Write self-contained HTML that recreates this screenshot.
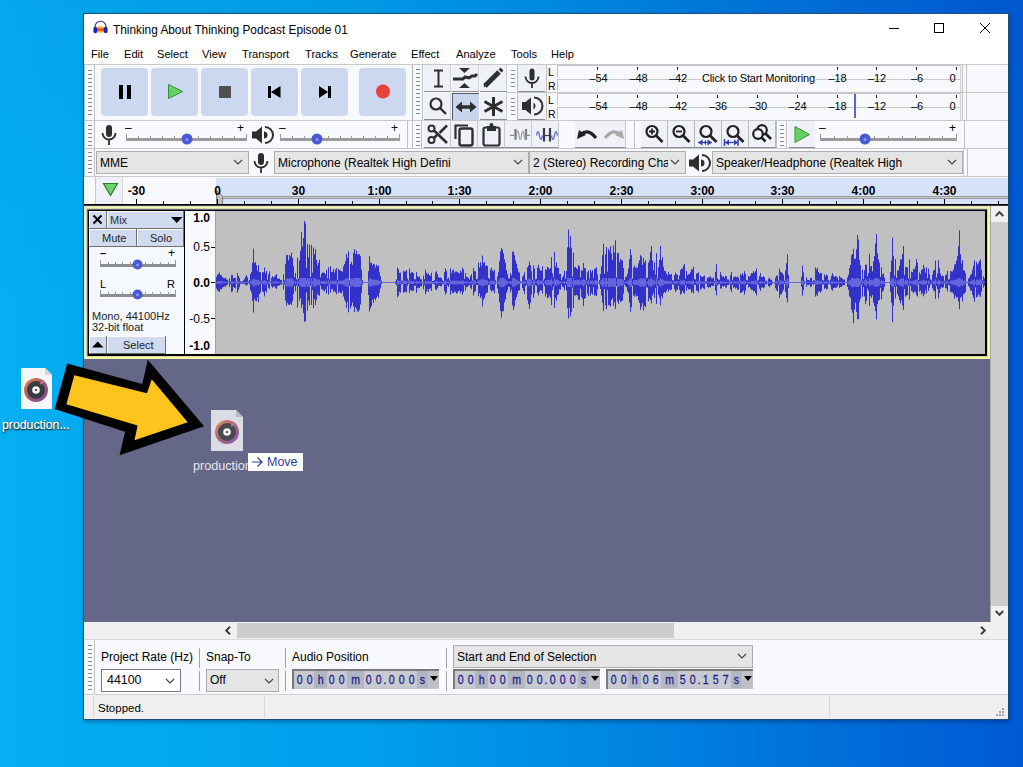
<!DOCTYPE html><html><head><meta charset="utf-8"><style>
html,body{margin:0;padding:0}
body{width:1023px;height:767px;overflow:hidden;position:relative;font-family:"Liberation Sans",sans-serif;font-size:12px;color:#000}
.a{position:absolute;box-sizing:border-box}
.t{white-space:nowrap;line-height:14px}
svg{position:absolute;overflow:visible}
</style></head><body>
<div class="a" style="left:0;top:0;width:1023px;height:767px;background:linear-gradient(180deg,rgba(0,30,110,0.05) 0%,rgba(0,30,110,0) 40%,rgba(0,30,110,0) 100%),linear-gradient(90deg,#06aef2 0%,#00a0ec 35%,#008ce4 55%,#0070da 80%,#005ad4 100%)"></div>
<div class="a" style="left:83px;top:13px;width:926px;height:707px;box-shadow:1px 2px 4px rgba(0,20,60,0.35)"></div>
<div class="a" style="left:83px;top:13px;width:926px;height:707px;background:#17507e"></div>
<div class="a" style="left:84px;top:14px;width:924px;height:705px;background:#ffffff"></div>
<svg style="left:92px;top:19px" width="17" height="15" viewBox="0 0 17 15">
<defs><linearGradient id="hg" x1="0" y1="0" x2="0" y2="1"><stop offset="0" stop-color="#fff4b0"/><stop offset="0.35" stop-color="#f6a030"/><stop offset="0.55" stop-color="#d83a00"/><stop offset="0.75" stop-color="#f6a030"/><stop offset="1" stop-color="#fff4b0"/></linearGradient></defs>
<ellipse cx="8.5" cy="10.3" rx="4.6" ry="4" fill="url(#hg)"/>
<path d="M3 9.5 V7.8 A5.5 5.5 0 0 1 14 7.8 V9.5" fill="none" stroke="#2a2a80" stroke-width="1.1"/>
<ellipse cx="3.3" cy="11" rx="2" ry="3.2" fill="#2020b8"/>
<ellipse cx="13.7" cy="11" rx="2" ry="3.2" fill="#2020b8"/>
</svg>
<div class="a t" style="left:113px;top:22.5px;font-size:12.6px;transform:scaleX(0.94);transform-origin:0 0">Thinking About Thinking Podcast Episode 01</div>
<div class="a" style="left:889px;top:28px;width:10px;height:1px;background:#000"></div>
<div class="a" style="left:934px;top:23px;width:10px;height:10px;border:1px solid #000"></div>
<svg style="left:980px;top:23px" width="10" height="10"><path d="M0 0L10 10M10 0L0 10" stroke="#000" stroke-width="1"/></svg>
<div class="a t" style="left:91px;top:47px;font-size:11.6px;transform:scaleX(0.96);transform-origin:0 0">File</div>
<div class="a t" style="left:123.5px;top:47px;font-size:11.6px;transform:scaleX(0.96);transform-origin:0 0">Edit</div>
<div class="a t" style="left:157px;top:47px;font-size:11.6px;transform:scaleX(0.96);transform-origin:0 0">Select</div>
<div class="a t" style="left:202px;top:47px;font-size:11.6px;transform:scaleX(0.96);transform-origin:0 0">View</div>
<div class="a t" style="left:241.5px;top:47px;font-size:11.6px;transform:scaleX(0.96);transform-origin:0 0">Transport</div>
<div class="a t" style="left:304.5px;top:47px;font-size:11.6px;transform:scaleX(0.96);transform-origin:0 0">Tracks</div>
<div class="a t" style="left:350px;top:47px;font-size:11.6px;transform:scaleX(0.96);transform-origin:0 0">Generate</div>
<div class="a t" style="left:411px;top:47px;font-size:11.6px;transform:scaleX(0.96);transform-origin:0 0">Effect</div>
<div class="a t" style="left:455.5px;top:47px;font-size:11.6px;transform:scaleX(0.96);transform-origin:0 0">Analyze</div>
<div class="a t" style="left:511px;top:47px;font-size:11.6px;transform:scaleX(0.96);transform-origin:0 0">Tools</div>
<div class="a t" style="left:551px;top:47px;font-size:11.6px;transform:scaleX(0.96);transform-origin:0 0">Help</div>
<div class="a" style="left:84px;top:64px;width:924px;height:113px;background:#f8f9fc"></div>
<div class="a" style="left:84px;top:64px;width:924px;height:1px;background:#d8d8d8"></div>
<div class="a" style="left:84px;top:64px;width:924px;height:1px;background:#c8c8c8"></div>
<div class="a" style="left:84px;top:120px;width:924px;height:1px;background:#c8c8c8"></div>
<div class="a" style="left:84px;top:148px;width:924px;height:1px;background:#c8c8c8"></div>
<div class="a" style="left:84px;top:176px;width:924px;height:1px;background:#c8c8c8"></div>
<div class="a" style="left:84px;top:64px;width:1px;height:113px;background:#9ccbe6"></div>
<div class="a" style="left:88px;top:70px;width:4px;height:1px;background:#8a8a8a"></div><div class="a" style="left:88px;top:74px;width:4px;height:1px;background:#8a8a8a"></div><div class="a" style="left:88px;top:78px;width:4px;height:1px;background:#8a8a8a"></div><div class="a" style="left:88px;top:82px;width:4px;height:1px;background:#8a8a8a"></div><div class="a" style="left:88px;top:86px;width:4px;height:1px;background:#8a8a8a"></div><div class="a" style="left:88px;top:90px;width:4px;height:1px;background:#8a8a8a"></div><div class="a" style="left:88px;top:94px;width:4px;height:1px;background:#8a8a8a"></div><div class="a" style="left:88px;top:98px;width:4px;height:1px;background:#8a8a8a"></div><div class="a" style="left:88px;top:102px;width:4px;height:1px;background:#8a8a8a"></div><div class="a" style="left:88px;top:106px;width:4px;height:1px;background:#8a8a8a"></div><div class="a" style="left:88px;top:110px;width:4px;height:1px;background:#8a8a8a"></div><div class="a" style="left:88px;top:114px;width:4px;height:1px;background:#8a8a8a"></div>
<div class="a" style="left:94px;top:65px;width:1px;height:55px;background:#c0c0c0"></div>
<div class="a" style="left:101px;top:68px;width:47px;height:48px;background:#cbd8ef;border-radius:4px"></div>
<div class="a" style="left:151px;top:68px;width:47px;height:48px;background:#cbd8ef;border-radius:4px"></div>
<div class="a" style="left:201px;top:68px;width:47px;height:48px;background:#cbd8ef;border-radius:4px"></div>
<div class="a" style="left:251px;top:68px;width:47px;height:48px;background:#cbd8ef;border-radius:4px"></div>
<div class="a" style="left:301px;top:68px;width:47px;height:48px;background:#cbd8ef;border-radius:4px"></div>
<div class="a" style="left:359px;top:68px;width:47px;height:48px;background:#cbd8ef;border-radius:4px"></div>
<div class="a" style="left:119px;top:85px;width:4px;height:14px;background:#000"></div>
<div class="a" style="left:127px;top:85px;width:4px;height:14px;background:#000"></div>
<svg style="left:167px;top:83px" width="18" height="18"><path d="M1.5 1.5 L15.5 8.5 L1.5 15.5 Z" fill="#64d264" stroke="#3c8c3c" stroke-width="1"/></svg>
<div class="a" style="left:219px;top:86px;width:12px;height:12px;background:#505050"></div>
<div class="a" style="left:268px;top:86px;width:3px;height:12px;background:#000"></div>
<svg style="left:271px;top:86px" width="10" height="12"><path d="M0 6 L9.5 0 V12 Z" fill="#000"/></svg>
<svg style="left:319px;top:86px" width="10" height="12"><path d="M0 0 L9 6 L0 12 Z" fill="#000"/></svg>
<div class="a" style="left:328px;top:86px;width:3px;height:12px;background:#000"></div>
<svg style="left:375px;top:84px" width="16" height="16"><circle cx="8" cy="7.5" r="7" fill="#e8403a"/></svg>
<div class="a" style="left:412px;top:65px;width:1px;height:55px;background:#b0b0b0"></div>
<div class="a" style="left:416px;top:69px;width:4px;height:1px;background:#8a8a8a"></div><div class="a" style="left:416px;top:73px;width:4px;height:1px;background:#8a8a8a"></div><div class="a" style="left:416px;top:77px;width:4px;height:1px;background:#8a8a8a"></div><div class="a" style="left:416px;top:81px;width:4px;height:1px;background:#8a8a8a"></div><div class="a" style="left:416px;top:85px;width:4px;height:1px;background:#8a8a8a"></div><div class="a" style="left:416px;top:89px;width:4px;height:1px;background:#8a8a8a"></div><div class="a" style="left:416px;top:93px;width:4px;height:1px;background:#8a8a8a"></div><div class="a" style="left:416px;top:97px;width:4px;height:1px;background:#8a8a8a"></div><div class="a" style="left:416px;top:101px;width:4px;height:1px;background:#8a8a8a"></div><div class="a" style="left:416px;top:105px;width:4px;height:1px;background:#8a8a8a"></div><div class="a" style="left:416px;top:109px;width:4px;height:1px;background:#8a8a8a"></div><div class="a" style="left:416px;top:113px;width:4px;height:1px;background:#8a8a8a"></div>
<div class="a" style="left:422px;top:65px;width:1px;height:55px;background:#c0c0c0"></div>
<div class="a" style="left:424px;top:65px;width:27px;height:27px;background:#eef1f8;border-bottom:1px solid #8c8c8c;border-right:1px solid #d0d0d0"></div>
<div class="a" style="left:452px;top:65px;width:27px;height:27px;background:#eef1f8;border-bottom:1px solid #8c8c8c;border-right:1px solid #d0d0d0"></div>
<div class="a" style="left:480px;top:65px;width:27px;height:27px;background:#eef1f8;border-bottom:1px solid #8c8c8c;border-right:1px solid #d0d0d0"></div>
<div class="a" style="left:424px;top:93px;width:27px;height:27px;background:#eef1f8;border-bottom:1px solid #8c8c8c;border-right:1px solid #d0d0d0"></div>
<div class="a" style="left:480px;top:93px;width:27px;height:27px;background:#eef1f8;border-bottom:1px solid #8c8c8c;border-right:1px solid #d0d0d0"></div>
<div class="a" style="left:452px;top:93px;width:27px;height:27px;background:#c9d5ec;border-top:1px solid #505868;border-left:1px solid #505868"></div>
<svg style="left:424px;top:65px" width="27" height="27"><path d="M10 5.5H19M14.5 5.5V21.5M10 21.5H19" stroke="#2e2e2e" stroke-width="2" fill="none"/></svg>
<svg style="left:452px;top:65px" width="27" height="27"><path d="M7 3H18L12.5 8Z M7 23H18L12.5 18Z" fill="#2e2e2e"/><path d="M1 14H11L13 12L17 13L20 11L23 11L25 9" stroke="#2e2e2e" stroke-width="3" fill="none"/></svg>
<svg style="left:480px;top:65px" width="27" height="27"><path d="M5 21L19 7" stroke="#2e2e2e" stroke-width="5"/><path d="M3.5 22.5L5 17L8 20Z" fill="#2e2e2e"/><path d="M20 6L22 4" stroke="#2e2e2e" stroke-width="4"/></svg>
<svg style="left:424px;top:93px" width="27" height="27"><circle cx="12" cy="11" r="5.5" stroke="#2e2e2e" stroke-width="2.2" fill="none"/><path d="M16 15L22 21" stroke="#2e2e2e" stroke-width="2.4"/></svg>
<svg style="left:452px;top:93px" width="27" height="27"><path d="M8 14H20" stroke="#2e2e2e" stroke-width="3.5"/><path d="M3.5 14L10 8.5V19.5Z M24.5 14L18 8.5V19.5Z" fill="#2e2e2e"/></svg>
<svg style="left:480px;top:93px" width="27" height="27"><path d="M13.5 4V23M4.5 8.5L22.5 18.5M4.5 18.5L22.5 8.5" stroke="#2e2e2e" stroke-width="3"/></svg>
<div class="a" style="left:511px;top:70px;width:4px;height:1px;background:#8a8a8a"></div><div class="a" style="left:511px;top:74px;width:4px;height:1px;background:#8a8a8a"></div><div class="a" style="left:511px;top:78px;width:4px;height:1px;background:#8a8a8a"></div><div class="a" style="left:511px;top:82px;width:4px;height:1px;background:#8a8a8a"></div><div class="a" style="left:511px;top:86px;width:4px;height:1px;background:#8a8a8a"></div>
<div class="a" style="left:511px;top:98px;width:4px;height:1px;background:#8a8a8a"></div><div class="a" style="left:511px;top:102px;width:4px;height:1px;background:#8a8a8a"></div><div class="a" style="left:511px;top:106px;width:4px;height:1px;background:#8a8a8a"></div><div class="a" style="left:511px;top:110px;width:4px;height:1px;background:#8a8a8a"></div><div class="a" style="left:511px;top:114px;width:4px;height:1px;background:#8a8a8a"></div>
<div class="a" style="left:517px;top:65px;width:1px;height:55px;background:#c0c0c0"></div>
<div class="a" style="left:506px;top:92px;width:502px;height:1px;background:#c8c8c8"></div>
<div class="a" style="left:518px;top:65px;width:27px;height:27px;background:#eef1f8;border-bottom:1px solid #8c8c8c"></div>
<div class="a" style="left:518px;top:93px;width:27px;height:27px;background:#eef1f8;border-bottom:1px solid #8c8c8c"></div>
<svg style="left:518px;top:65px" width="27" height="27"><rect x="11.5" y="3.5" width="5" height="12" rx="2.5" fill="#2e2e2e"/><path d="M7.5 11.5 A6.5 6.5 0 0 0 20.5 11.5 M14 18 V23" stroke="#2e2e2e" stroke-width="1.8" fill="none"/></svg>
<svg style="left:518px;top:93px" width="27" height="27"><path d="M4 9H7.5L13 4.5V21.5L7.5 17H4Z" fill="#2e2e2e"/><path d="M15.5 9.5A4 4 0 0 1 15.5 16.5Z" fill="#2e2e2e"/><path d="M16 4.5A8.5 8.5 0 0 1 16 21.5" stroke="#2e2e2e" stroke-width="2" fill="none"/></svg>
<div class="a" style="left:546px;top:65px;width:1px;height:27px;background:#c0c0c0"></div>
<div class="a t" style="left:548px;top:66px;font-size:10.5px;line-height:12px">L</div>
<div class="a t" style="left:548px;top:80px;font-size:10.5px;line-height:12px">R</div>
<div class="a" style="left:557px;top:65px;width:403px;height:27px;background:#f7f9fc"></div>
<div class="a" style="left:557px;top:65px;width:403px;height:1px;background:#c4c4c4"></div>
<div class="a" style="left:557px;top:79px;width:403px;height:1px;background:#c8c8c8"></div>
<div class="a" style="left:557px;top:65px;width:1px;height:12px;background:#c0c0c0"></div>
<div class="a" style="left:557px;top:79px;width:1px;height:12px;background:#c0c0c0"></div>
<div class="a" style="left:960px;top:65px;width:1px;height:27px;background:#d0d0d0"></div>
<div class="a" style="left:962px;top:65px;width:1px;height:27px;background:#c0c0c0"></div>
<div class="a" style="left:966px;top:65px;width:1px;height:27px;background:#c0c0c0"></div>
<div class="a" style="left:546px;top:93px;width:1px;height:27px;background:#c0c0c0"></div>
<div class="a t" style="left:548px;top:94px;font-size:10.5px;line-height:12px">L</div>
<div class="a t" style="left:548px;top:108px;font-size:10.5px;line-height:12px">R</div>
<div class="a" style="left:557px;top:93px;width:403px;height:27px;background:#f7f9fc"></div>
<div class="a" style="left:557px;top:93px;width:403px;height:1px;background:#c4c4c4"></div>
<div class="a" style="left:557px;top:107px;width:403px;height:1px;background:#c8c8c8"></div>
<div class="a" style="left:557px;top:93px;width:1px;height:12px;background:#c0c0c0"></div>
<div class="a" style="left:557px;top:107px;width:1px;height:12px;background:#c0c0c0"></div>
<div class="a" style="left:960px;top:93px;width:1px;height:27px;background:#d0d0d0"></div>
<div class="a" style="left:962px;top:93px;width:1px;height:27px;background:#c0c0c0"></div>
<div class="a" style="left:966px;top:93px;width:1px;height:27px;background:#c0c0c0"></div>
<div class="a" style="left:597px;top:67px;width:1px;height:3px;background:#202020"></div>
<div class="a t" style="left:578.5px;top:72px;width:40px;text-align:center;font-size:11px;line-height:13px;letter-spacing:-0.2px">&#8211;54</div>
<div class="a" style="left:637px;top:67px;width:1px;height:3px;background:#202020"></div>
<div class="a t" style="left:618.5px;top:72px;width:40px;text-align:center;font-size:11px;line-height:13px;letter-spacing:-0.2px">&#8211;48</div>
<div class="a" style="left:677px;top:67px;width:1px;height:3px;background:#202020"></div>
<div class="a t" style="left:658.0px;top:72px;width:40px;text-align:center;font-size:11px;line-height:13px;letter-spacing:-0.2px">&#8211;42</div>
<div class="a" style="left:837px;top:67px;width:1px;height:3px;background:#202020"></div>
<div class="a t" style="left:817.5px;top:72px;width:40px;text-align:center;font-size:11px;line-height:13px;letter-spacing:-0.2px">&#8211;18</div>
<div class="a" style="left:876px;top:67px;width:1px;height:3px;background:#202020"></div>
<div class="a t" style="left:857.0px;top:72px;width:40px;text-align:center;font-size:11px;line-height:13px;letter-spacing:-0.2px">&#8211;12</div>
<div class="a" style="left:916px;top:67px;width:1px;height:3px;background:#202020"></div>
<div class="a t" style="left:897.0px;top:72px;width:40px;text-align:center;font-size:11px;line-height:13px;letter-spacing:-0.2px">&#8211;6</div>
<div class="a" style="left:956px;top:67px;width:1px;height:3px;background:#202020"></div>
<div class="a t" style="left:932.5px;top:72px;width:40px;text-align:center;font-size:11px;line-height:13px;letter-spacing:-0.2px">0</div>
<div class="a" style="left:597px;top:95px;width:1px;height:3px;background:#202020"></div>
<div class="a t" style="left:578.5px;top:100px;width:40px;text-align:center;font-size:11px;line-height:13px;letter-spacing:-0.2px">&#8211;54</div>
<div class="a" style="left:637px;top:95px;width:1px;height:3px;background:#202020"></div>
<div class="a t" style="left:618.5px;top:100px;width:40px;text-align:center;font-size:11px;line-height:13px;letter-spacing:-0.2px">&#8211;48</div>
<div class="a" style="left:677px;top:95px;width:1px;height:3px;background:#202020"></div>
<div class="a t" style="left:658.0px;top:100px;width:40px;text-align:center;font-size:11px;line-height:13px;letter-spacing:-0.2px">&#8211;42</div>
<div class="a" style="left:717px;top:95px;width:1px;height:3px;background:#202020"></div>
<div class="a t" style="left:698.0px;top:100px;width:40px;text-align:center;font-size:11px;line-height:13px;letter-spacing:-0.2px">&#8211;36</div>
<div class="a" style="left:757px;top:95px;width:1px;height:3px;background:#202020"></div>
<div class="a t" style="left:738.0px;top:100px;width:40px;text-align:center;font-size:11px;line-height:13px;letter-spacing:-0.2px">&#8211;30</div>
<div class="a" style="left:797px;top:95px;width:1px;height:3px;background:#202020"></div>
<div class="a t" style="left:777.5px;top:100px;width:40px;text-align:center;font-size:11px;line-height:13px;letter-spacing:-0.2px">&#8211;24</div>
<div class="a" style="left:837px;top:95px;width:1px;height:3px;background:#202020"></div>
<div class="a t" style="left:817.5px;top:100px;width:40px;text-align:center;font-size:11px;line-height:13px;letter-spacing:-0.2px">&#8211;18</div>
<div class="a" style="left:876px;top:95px;width:1px;height:3px;background:#202020"></div>
<div class="a t" style="left:857.0px;top:100px;width:40px;text-align:center;font-size:11px;line-height:13px;letter-spacing:-0.2px">&#8211;12</div>
<div class="a" style="left:916px;top:95px;width:1px;height:3px;background:#202020"></div>
<div class="a t" style="left:897.0px;top:100px;width:40px;text-align:center;font-size:11px;line-height:13px;letter-spacing:-0.2px">&#8211;6</div>
<div class="a" style="left:956px;top:95px;width:1px;height:3px;background:#202020"></div>
<div class="a t" style="left:932.5px;top:100px;width:40px;text-align:center;font-size:11px;line-height:13px;letter-spacing:-0.2px">0</div>
<div class="a t" style="left:701px;top:72px;font-size:11px;line-height:13px;letter-spacing:-0.15px;background:#f7f9fc;padding:0 1px">Click to Start Monitoring</div>
<div class="a" style="left:854px;top:94px;width:2px;height:24px;background:#6060d0"></div>
<div class="a" style="left:88px;top:125px;width:4px;height:1px;background:#8a8a8a"></div><div class="a" style="left:88px;top:129px;width:4px;height:1px;background:#8a8a8a"></div><div class="a" style="left:88px;top:133px;width:4px;height:1px;background:#8a8a8a"></div><div class="a" style="left:88px;top:137px;width:4px;height:1px;background:#8a8a8a"></div><div class="a" style="left:88px;top:141px;width:4px;height:1px;background:#8a8a8a"></div><div class="a" style="left:88px;top:145px;width:4px;height:1px;background:#8a8a8a"></div>
<div class="a" style="left:94px;top:121px;width:1px;height:27px;background:#c0c0c0"></div>
<div class="a" style="left:126px;top:138px;width:121px;height:3px;background:#9a9a9a"></div>
<div class="a" style="left:126px;top:134px;width:1px;height:5px;background:#9a9a9a"></div>
<div class="a" style="left:138px;top:136px;width:1px;height:3px;background:#9a9a9a"></div>
<div class="a" style="left:150px;top:136px;width:1px;height:3px;background:#9a9a9a"></div>
<div class="a" style="left:162px;top:136px;width:1px;height:3px;background:#9a9a9a"></div>
<div class="a" style="left:174px;top:136px;width:1px;height:3px;background:#9a9a9a"></div>
<div class="a" style="left:186px;top:136px;width:1px;height:3px;background:#9a9a9a"></div>
<div class="a" style="left:198px;top:136px;width:1px;height:3px;background:#9a9a9a"></div>
<div class="a" style="left:210px;top:136px;width:1px;height:3px;background:#9a9a9a"></div>
<div class="a" style="left:222px;top:136px;width:1px;height:3px;background:#9a9a9a"></div>
<div class="a" style="left:234px;top:136px;width:1px;height:3px;background:#9a9a9a"></div>
<div class="a" style="left:246px;top:134px;width:1px;height:5px;background:#9a9a9a"></div>
<svg style="left:181px;top:133px" width="12" height="12"><circle cx="6" cy="6" r="5.5" fill="#4a5ad6"/><circle cx="6" cy="6.5" r="1.5" fill="#8a98f0"/></svg>
<div class="a t" style="left:125px;top:121px;font-size:12px">&#8211;</div>
<div class="a t" style="left:237px;top:121px;font-size:12px">+</div>
<div class="a" style="left:280px;top:138px;width:120px;height:3px;background:#9a9a9a"></div>
<div class="a" style="left:280px;top:134px;width:1px;height:5px;background:#9a9a9a"></div>
<div class="a" style="left:292px;top:136px;width:1px;height:3px;background:#9a9a9a"></div>
<div class="a" style="left:304px;top:136px;width:1px;height:3px;background:#9a9a9a"></div>
<div class="a" style="left:316px;top:136px;width:1px;height:3px;background:#9a9a9a"></div>
<div class="a" style="left:328px;top:136px;width:1px;height:3px;background:#9a9a9a"></div>
<div class="a" style="left:340px;top:136px;width:1px;height:3px;background:#9a9a9a"></div>
<div class="a" style="left:351px;top:136px;width:1px;height:3px;background:#9a9a9a"></div>
<div class="a" style="left:363px;top:136px;width:1px;height:3px;background:#9a9a9a"></div>
<div class="a" style="left:375px;top:136px;width:1px;height:3px;background:#9a9a9a"></div>
<div class="a" style="left:387px;top:136px;width:1px;height:3px;background:#9a9a9a"></div>
<div class="a" style="left:399px;top:134px;width:1px;height:5px;background:#9a9a9a"></div>
<svg style="left:311px;top:133px" width="12" height="12"><circle cx="6" cy="6" r="5.5" fill="#4a5ad6"/><circle cx="6" cy="6.5" r="1.5" fill="#8a98f0"/></svg>
<div class="a t" style="left:279px;top:121px;font-size:12px">&#8211;</div>
<div class="a t" style="left:391px;top:121px;font-size:12px">+</div>
<svg style="left:101px;top:124px" width="16" height="22"><rect x="5" y="1" width="6" height="12" rx="3" fill="#2e2e2e"/><path d="M1.5 9 A6.5 6.5 0 0 0 14.5 9 M8 15.5 V21" stroke="#2e2e2e" stroke-width="1.8" fill="none"/></svg>
<svg style="left:251px;top:125px" width="21" height="20"><path d="M1 6.5H5L11 1.5V18.5L5 13.5H1Z" fill="#2e2e2e"/><path d="M13 6.5A3.5 3.5 0 0 1 13 13.5Z" fill="#2e2e2e"/><path d="M14 2A8 8 0 0 1 14 18" stroke="#2e2e2e" stroke-width="2" fill="none"/></svg>
<div class="a" style="left:407px;top:121px;width:1px;height:27px;background:#c0c0c0"></div>
<div class="a" style="left:412px;top:121px;width:1px;height:27px;background:#c0c0c0"></div>
<div class="a" style="left:416px;top:125px;width:4px;height:1px;background:#8a8a8a"></div><div class="a" style="left:416px;top:129px;width:4px;height:1px;background:#8a8a8a"></div><div class="a" style="left:416px;top:133px;width:4px;height:1px;background:#8a8a8a"></div><div class="a" style="left:416px;top:137px;width:4px;height:1px;background:#8a8a8a"></div><div class="a" style="left:416px;top:141px;width:4px;height:1px;background:#8a8a8a"></div><div class="a" style="left:416px;top:145px;width:4px;height:1px;background:#8a8a8a"></div>
<div class="a" style="left:421px;top:121px;width:1px;height:27px;background:#c0c0c0"></div>
<div class="a" style="left:424px;top:121px;width:27px;height:27px;background:#eef1f8;border-bottom:1px solid #8c8c8c;border-right:1px solid #c8c8c8"></div>
<div class="a" style="left:451px;top:121px;width:27px;height:27px;background:#eef1f8;border-bottom:1px solid #8c8c8c;border-right:1px solid #c8c8c8"></div>
<div class="a" style="left:478px;top:121px;width:27px;height:27px;background:#eef1f8;border-bottom:1px solid #8c8c8c;border-right:1px solid #c8c8c8"></div>
<div class="a" style="left:505px;top:121px;width:27px;height:27px;background:#eef1f8;border-bottom:1px solid #8c8c8c;border-right:1px solid #c8c8c8"></div>
<div class="a" style="left:532px;top:121px;width:27px;height:27px;background:#eef1f8;border-bottom:1px solid #8c8c8c;border-right:1px solid #c8c8c8"></div>
<div class="a" style="left:575px;top:121px;width:27px;height:27px;background:#eef1f8;border-bottom:1px solid #8c8c8c;border-right:1px solid #c8c8c8"></div>
<div class="a" style="left:600px;top:121px;width:26px;height:27px;background:#eef1f8;border-bottom:1px solid #8c8c8c;border-right:1px solid #c8c8c8"></div>
<div class="a" style="left:559px;top:121px;width:16px;height:27px;background:#f8f9fc"></div>
<svg style="left:424px;top:121px" width="27" height="27"><circle cx="7.5" cy="7.5" r="3" stroke="#2e2e2e" stroke-width="2" fill="none"/><circle cx="7.5" cy="19" r="3" stroke="#2e2e2e" stroke-width="2" fill="none"/><path d="M10 9.5L23 22M23 4.5L15.5 12" stroke="#2e2e2e" stroke-width="2.5"/><path d="M10 17L13 14" stroke="#2e2e2e" stroke-width="2.5"/></svg>
<svg style="left:451px;top:121px" width="27" height="27"><path d="M4.5 18V4.5H17" stroke="#2e2e2e" stroke-width="2.2" fill="none"/><rect x="8.5" y="7.5" width="13" height="17" rx="2" stroke="#2e2e2e" stroke-width="2.4" fill="none"/></svg>
<svg style="left:478px;top:121px" width="27" height="27"><rect x="5.5" y="6.5" width="16" height="18" rx="2" stroke="#2e2e2e" stroke-width="2.2" fill="none"/><path d="M9 5H18V10H9Z" fill="#2e2e2e"/><circle cx="13.5" cy="4" r="2" fill="#2e2e2e"/></svg>
<svg style="left:505px;top:121px" width="27" height="27"><path d="M5 14.3H9M21 14.3H25" stroke="#8a8a8a" stroke-width="1.2"/><path d="M10.5 8V18.7M21 8V18.7" stroke="#7a7a7a" stroke-width="2.2"/><path d="M11.5 14.3 Q12.75 6 14 14.3 T16.5 14.3 T19 14.3 T21 14.3" stroke="#9a9a9a" stroke-width="1.1" fill="none"/></svg>
<svg style="left:532px;top:121px" width="27" height="27"><path d="M4.5 14.5 Q6 7 7.5 14.5 T10.5 14.5 M19.5 14.5 Q21 22 22.5 14.5 T25.5 14.5" stroke="#6070d8" stroke-width="1.3" fill="none"/><path d="M12 7V20.5M18 7V20.5" stroke="#3a3a48" stroke-width="2.2"/><path d="M13 14.5H17" stroke="#3a3a48" stroke-width="1.2"/></svg>
<svg style="left:575px;top:121px" width="25" height="27"><path d="M6 13.5 Q13 7 21 17" stroke="#202020" stroke-width="3.2" fill="none"/><path d="M2 18L4 9L11 14Z" fill="#202020"/></svg>
<svg style="left:600px;top:121px" width="26" height="27"><path d="M20 13.5 Q13 7 5 17" stroke="#a8a8a8" stroke-width="3.2" fill="none"/><path d="M24 18L22 9L15 14Z" fill="#a8a8a8"/></svg>
<div class="a" style="left:634px;top:121px;width:1px;height:27px;background:#c0c0c0"></div>
<div class="a" style="left:641px;top:121px;width:27px;height:27px;background:#eef1f8;border-bottom:1px solid #8c8c8c;border-right:1px solid #b8b8b8"></div>
<div class="a" style="left:668px;top:121px;width:27px;height:27px;background:#eef1f8;border-bottom:1px solid #8c8c8c;border-right:1px solid #b8b8b8"></div>
<div class="a" style="left:695px;top:121px;width:27px;height:27px;background:#eef1f8;border-bottom:1px solid #8c8c8c;border-right:1px solid #b8b8b8"></div>
<div class="a" style="left:722px;top:121px;width:27px;height:27px;background:#eef1f8;border-bottom:1px solid #8c8c8c;border-right:1px solid #b8b8b8"></div>
<div class="a" style="left:749px;top:121px;width:27px;height:27px;background:#eef1f8;border-bottom:1px solid #8c8c8c;border-right:1px solid #b8b8b8"></div>
<svg style="left:641px;top:121px" width="27" height="27"><circle cx="11" cy="10.5" r="5.5" stroke="#202020" stroke-width="2.2" fill="none"/><path d="M15 14.5L21.5 21" stroke="#202020" stroke-width="2.6"/><path d="M8 10.5H14M11 7.5V13.5" stroke="#202020" stroke-width="1.8"/></svg>
<svg style="left:668px;top:121px" width="27" height="27"><circle cx="11" cy="10.5" r="5.5" stroke="#202020" stroke-width="2.2" fill="none"/><path d="M15 14.5L21.5 21" stroke="#202020" stroke-width="2.6"/><path d="M8 10.5H14" stroke="#202020" stroke-width="1.8"/></svg>
<svg style="left:695px;top:121px" width="27" height="27"><circle cx="11" cy="10.5" r="5.5" stroke="#202020" stroke-width="2.2" fill="none"/><path d="M15 14.5L21.5 21" stroke="#202020" stroke-width="2.6"/><path d="M3 21.5H17" stroke="#3040b0" stroke-width="1.2"/><path d="M3 21.5L7.5 18.5V24.5Z M17 21.5L12.5 18.5V24.5Z M9 21.5L11 18.5 V24.5Z" fill="#3040b0"/></svg>
<svg style="left:722px;top:121px" width="27" height="27"><circle cx="11" cy="10.5" r="5.5" stroke="#202020" stroke-width="2.2" fill="none"/><path d="M15 14.5L21.5 21" stroke="#202020" stroke-width="2.6"/><path d="M2.5 21.5H16" stroke="#3040b0" stroke-width="1.2"/><path d="M2.5 18V25 M16 18V25" stroke="#3040b0" stroke-width="1.5"/><path d="M3 21.5L7 18.5V24.5Z M16 21.5L12 18.5V24.5Z" fill="#3040b0"/></svg>
<svg style="left:749px;top:121px" width="27" height="27"><circle cx="13" cy="9" r="4.8" stroke="#202020" stroke-width="2.2" fill="#f0f2f8"/><path d="M16.5 12.5L22 18" stroke="#202020" stroke-width="2.6"/><circle cx="9" cy="13" r="4.8" stroke="#202020" stroke-width="2.2" fill="#f0f2f8"/><path d="M12.5 16.5L16.5 20.5" stroke="#202020" stroke-width="2.6"/></svg>
<div class="a" style="left:776px;top:121px;width:1px;height:27px;background:#c0c0c0"></div>
<div class="a" style="left:780px;top:125px;width:4px;height:1px;background:#8a8a8a"></div><div class="a" style="left:780px;top:129px;width:4px;height:1px;background:#8a8a8a"></div><div class="a" style="left:780px;top:133px;width:4px;height:1px;background:#8a8a8a"></div><div class="a" style="left:780px;top:137px;width:4px;height:1px;background:#8a8a8a"></div><div class="a" style="left:780px;top:141px;width:4px;height:1px;background:#8a8a8a"></div><div class="a" style="left:780px;top:145px;width:4px;height:1px;background:#8a8a8a"></div>
<div class="a" style="left:786px;top:121px;width:1px;height:27px;background:#c0c0c0"></div>
<div class="a" style="left:789px;top:121px;width:26px;height:27px;background:#eef1f8;border-bottom:1px solid #8c8c8c"></div>
<svg style="left:789px;top:121px" width="26" height="27"><path d="M6 5.5L20.5 13.5L6 21.5Z" fill="#64d264" stroke="#3c8c3c" stroke-width="1"/></svg>
<div class="a" style="left:820px;top:138px;width:137px;height:3px;background:#9a9a9a"></div>
<div class="a" style="left:820px;top:134px;width:1px;height:5px;background:#9a9a9a"></div>
<div class="a" style="left:834px;top:136px;width:1px;height:3px;background:#9a9a9a"></div>
<div class="a" style="left:847px;top:136px;width:1px;height:3px;background:#9a9a9a"></div>
<div class="a" style="left:861px;top:136px;width:1px;height:3px;background:#9a9a9a"></div>
<div class="a" style="left:874px;top:136px;width:1px;height:3px;background:#9a9a9a"></div>
<div class="a" style="left:888px;top:136px;width:1px;height:3px;background:#9a9a9a"></div>
<div class="a" style="left:902px;top:136px;width:1px;height:3px;background:#9a9a9a"></div>
<div class="a" style="left:915px;top:136px;width:1px;height:3px;background:#9a9a9a"></div>
<div class="a" style="left:929px;top:136px;width:1px;height:3px;background:#9a9a9a"></div>
<div class="a" style="left:942px;top:136px;width:1px;height:3px;background:#9a9a9a"></div>
<div class="a" style="left:956px;top:134px;width:1px;height:5px;background:#9a9a9a"></div>
<svg style="left:859px;top:133px" width="12" height="12"><circle cx="6" cy="6" r="5.5" fill="#4a5ad6"/><circle cx="6" cy="6.5" r="1.5" fill="#8a98f0"/></svg>
<div class="a t" style="left:819px;top:121px;font-size:12px">&#8211;</div>
<div class="a t" style="left:949px;top:121px;font-size:12px">+</div>
<div class="a" style="left:964px;top:121px;width:1px;height:27px;background:#c0c0c0"></div>
<div class="a" style="left:88px;top:152px;width:4px;height:1px;background:#8a8a8a"></div><div class="a" style="left:88px;top:156px;width:4px;height:1px;background:#8a8a8a"></div><div class="a" style="left:88px;top:160px;width:4px;height:1px;background:#8a8a8a"></div><div class="a" style="left:88px;top:164px;width:4px;height:1px;background:#8a8a8a"></div><div class="a" style="left:88px;top:168px;width:4px;height:1px;background:#8a8a8a"></div><div class="a" style="left:88px;top:172px;width:4px;height:1px;background:#8a8a8a"></div>
<div class="a" style="left:94px;top:149px;width:1px;height:27px;background:#c0c0c0"></div>
<div class="a" style="left:96px;top:151px;width:153px;height:23px;background:#e5e5e5;border:1px solid #adadad"></div>
<div class="a t" style="left:100px;top:156px;width:131px;overflow:hidden;font-size:12px">MME</div>
<svg style="left:233px;top:159px" width="10" height="6"><path d="M1 1L5 5L9 1" stroke="#404040" stroke-width="1.1" fill="none"/></svg>
<div class="a" style="left:274px;top:151px;width:255px;height:23px;background:#e5e5e5;border:1px solid #adadad"></div>
<div class="a t" style="left:278px;top:156px;width:233px;overflow:hidden;font-size:12px">Microphone (Realtek High Defini</div>
<svg style="left:513px;top:159px" width="10" height="6"><path d="M1 1L5 5L9 1" stroke="#404040" stroke-width="1.1" fill="none"/></svg>
<div class="a" style="left:529px;top:151px;width:157px;height:23px;background:#e5e5e5;border:1px solid #adadad"></div>
<div class="a t" style="left:533px;top:156px;width:135px;overflow:hidden;font-size:12px">2 (Stereo) Recording Channels</div>
<svg style="left:670px;top:159px" width="10" height="6"><path d="M1 1L5 5L9 1" stroke="#404040" stroke-width="1.1" fill="none"/></svg>
<div class="a" style="left:712px;top:151px;width:251px;height:23px;background:#e5e5e5;border:1px solid #adadad"></div>
<div class="a t" style="left:716px;top:156px;width:229px;overflow:hidden;font-size:12px">Speaker/Headphone (Realtek High</div>
<svg style="left:947px;top:159px" width="10" height="6"><path d="M1 1L5 5L9 1" stroke="#404040" stroke-width="1.1" fill="none"/></svg>
<svg style="left:253px;top:152px" width="16" height="22"><rect x="5" y="1" width="6" height="12" rx="3" fill="#2e2e2e"/><path d="M1.5 9 A6.5 6.5 0 0 0 14.5 9 M8 15.5 V21" stroke="#2e2e2e" stroke-width="1.8" fill="none"/></svg>
<svg style="left:688px;top:153px" width="21" height="20"><path d="M1 6.5H5L11 1.5V18.5L5 13.5H1Z" fill="#2e2e2e"/><path d="M13 6.5A3.5 3.5 0 0 1 13 13.5Z" fill="#2e2e2e"/><path d="M14 2A8 8 0 0 1 14 18" stroke="#2e2e2e" stroke-width="2" fill="none"/></svg>
<div class="a" style="left:963px;top:149px;width:1px;height:27px;background:#c8c8c8"></div>
<div class="a" style="left:967px;top:149px;width:1px;height:27px;background:#c0c0c0"></div>
<div class="a" style="left:84px;top:177px;width:924px;height:28px;background:#f8f9fc"></div>
<div class="a" style="left:84px;top:176px;width:924px;height:1px;background:#c8c8c8"></div>
<div class="a" style="left:95px;top:177px;width:1px;height:27px;background:#c8c8c8"></div>
<div class="a" style="left:96px;top:177px;width:26px;height:27px;background:#eef1f8"></div>
<div class="a" style="left:122px;top:177px;width:1px;height:27px;background:#d8d8d8"></div>
<svg style="left:102px;top:182px" width="17" height="15"><path d="M1.5 1.5H15.5L8.5 13.5Z" fill="#6cd46c" stroke="#2f7a2f" stroke-width="1.2"/></svg>
<div class="a" style="left:216px;top:178px;width:792px;height:26px;background:#d5e2f9"></div>
<div class="a" style="left:222px;top:196px;width:786px;height:1px;background:#9a9a9a"></div>
<div class="a" style="left:222px;top:197px;width:786px;height:1px;background:#c4c8d0"></div>
<div class="a" style="left:222px;top:198px;width:786px;height:1px;background:#9a9a9a"></div>
<svg style="left:216px;top:190px" width="7" height="15"><path d="M0.5 0.5L6.5 6V14.5H0.5Z" fill="#c0c0c0" stroke="#7a7a7a" stroke-width="1"/></svg>
<div class="a" style="left:136px;top:199px;width:1px;height:5px;background:#000"></div>
<div class="a t" style="left:106px;top:184px;width:61px;text-align:center;font-weight:bold;font-size:12px">-30</div>
<div class="a" style="left:163px;top:201px;width:1px;height:3px;background:#000"></div>
<div class="a" style="left:190px;top:201px;width:1px;height:3px;background:#000"></div>
<div class="a" style="left:217px;top:199px;width:1px;height:5px;background:#000"></div>
<div class="a t" style="left:187px;top:184px;width:61px;text-align:center;font-weight:bold;font-size:12px">0</div>
<div class="a" style="left:244px;top:201px;width:1px;height:3px;background:#000"></div>
<div class="a" style="left:271px;top:201px;width:1px;height:3px;background:#000"></div>
<div class="a" style="left:298px;top:199px;width:1px;height:5px;background:#000"></div>
<div class="a t" style="left:268px;top:184px;width:61px;text-align:center;font-weight:bold;font-size:12px">30</div>
<div class="a" style="left:325px;top:201px;width:1px;height:3px;background:#000"></div>
<div class="a" style="left:352px;top:201px;width:1px;height:3px;background:#000"></div>
<div class="a" style="left:379px;top:199px;width:1px;height:5px;background:#000"></div>
<div class="a t" style="left:349px;top:184px;width:61px;text-align:center;font-weight:bold;font-size:12px">1:00</div>
<div class="a" style="left:406px;top:201px;width:1px;height:3px;background:#000"></div>
<div class="a" style="left:432px;top:201px;width:1px;height:3px;background:#000"></div>
<div class="a" style="left:459px;top:199px;width:1px;height:5px;background:#000"></div>
<div class="a t" style="left:429px;top:184px;width:61px;text-align:center;font-weight:bold;font-size:12px">1:30</div>
<div class="a" style="left:486px;top:201px;width:1px;height:3px;background:#000"></div>
<div class="a" style="left:513px;top:201px;width:1px;height:3px;background:#000"></div>
<div class="a" style="left:540px;top:199px;width:1px;height:5px;background:#000"></div>
<div class="a t" style="left:510px;top:184px;width:61px;text-align:center;font-weight:bold;font-size:12px">2:00</div>
<div class="a" style="left:567px;top:201px;width:1px;height:3px;background:#000"></div>
<div class="a" style="left:594px;top:201px;width:1px;height:3px;background:#000"></div>
<div class="a" style="left:621px;top:199px;width:1px;height:5px;background:#000"></div>
<div class="a t" style="left:591px;top:184px;width:61px;text-align:center;font-weight:bold;font-size:12px">2:30</div>
<div class="a" style="left:648px;top:201px;width:1px;height:3px;background:#000"></div>
<div class="a" style="left:675px;top:201px;width:1px;height:3px;background:#000"></div>
<div class="a" style="left:702px;top:199px;width:1px;height:5px;background:#000"></div>
<div class="a t" style="left:672px;top:184px;width:61px;text-align:center;font-weight:bold;font-size:12px">3:00</div>
<div class="a" style="left:729px;top:201px;width:1px;height:3px;background:#000"></div>
<div class="a" style="left:755px;top:201px;width:1px;height:3px;background:#000"></div>
<div class="a" style="left:782px;top:199px;width:1px;height:5px;background:#000"></div>
<div class="a t" style="left:752px;top:184px;width:61px;text-align:center;font-weight:bold;font-size:12px">3:30</div>
<div class="a" style="left:809px;top:201px;width:1px;height:3px;background:#000"></div>
<div class="a" style="left:836px;top:201px;width:1px;height:3px;background:#000"></div>
<div class="a" style="left:863px;top:199px;width:1px;height:5px;background:#000"></div>
<div class="a t" style="left:833px;top:184px;width:61px;text-align:center;font-weight:bold;font-size:12px">4:00</div>
<div class="a" style="left:890px;top:201px;width:1px;height:3px;background:#000"></div>
<div class="a" style="left:917px;top:201px;width:1px;height:3px;background:#000"></div>
<div class="a" style="left:944px;top:199px;width:1px;height:5px;background:#000"></div>
<div class="a t" style="left:914px;top:184px;width:61px;text-align:center;font-weight:bold;font-size:12px">4:30</div>
<div class="a" style="left:971px;top:201px;width:1px;height:3px;background:#000"></div>
<div class="a" style="left:998px;top:201px;width:1px;height:3px;background:#000"></div>
<div class="a" style="left:84px;top:204px;width:924px;height:1px;background:#000"></div>
<div class="a" style="left:84px;top:205px;width:924px;height:1px;background:#3a3a3a"></div>
<div class="a" style="left:84px;top:206px;width:907px;height:416px;background:#646787"></div>
<div class="a" style="left:84px;top:206px;width:907px;height:2px;background:#e4e4d8"></div>
<div class="a" style="left:84px;top:206px;width:2px;height:153px;background:#e4e4d8"></div>
<div class="a" style="left:85px;top:207px;width:905px;height:152px;border:2px solid #f6f6a8;border-right-width:3px;border-bottom-width:3px"></div>
<div class="a" style="left:86px;top:208px;width:902px;height:149px;border:1px solid #d8d8a0"></div>
<div class="a" style="left:88px;top:210px;width:899px;height:146px;background:#000"></div>
<div class="a" style="left:89px;top:211px;width:896px;height:143px;background:#f5f8fc"></div>
<div class="a" style="left:89px;top:211px;width:18px;height:18px;background:#d0dbf0;border-right:1px solid #707070;border-bottom:1px solid #707070;box-shadow:inset 1px 1px 0 #fff"></div>
<div class="a" style="left:107px;top:211px;width:77px;height:18px;background:#d0dbf0;border-right:1px solid #707070;border-bottom:1px solid #707070;box-shadow:inset 1px 1px 0 #fff"></div>
<div class="a" style="left:89px;top:229px;width:48px;height:18px;background:#d0dbf0;border-right:1px solid #707070;border-bottom:1px solid #707070;box-shadow:inset 1px 1px 0 #fff"></div>
<div class="a" style="left:137px;top:229px;width:47px;height:18px;background:#d0dbf0;border-right:1px solid #707070;border-bottom:1px solid #707070;box-shadow:inset 1px 1px 0 #fff"></div>
<svg style="left:92px;top:214px" width="12" height="12"><path d="M1.5 1.5L9.5 9.5M9.5 1.5L1.5 9.5" stroke="#000" stroke-width="2"/></svg>
<div class="a t" style="left:110px;top:213px;font-size:11px;color:#2a2a3a">Mix</div>
<svg style="left:171px;top:217px" width="12" height="6"><path d="M0 0H11.5L5.75 6Z" fill="#000"/></svg>
<div class="a t" style="left:102px;top:231px;font-size:11px;color:#222">Mute</div>
<div class="a t" style="left:150px;top:231px;font-size:11px;color:#222">Solo</div>
<div class="a" style="left:100px;top:264px;width:76px;height:3px;background:#8c8c8c"></div>
<div class="a" style="left:100px;top:260px;width:1px;height:5px;background:#9a9a9a"></div>
<div class="a" style="left:108px;top:262px;width:1px;height:3px;background:#9a9a9a"></div>
<div class="a" style="left:115px;top:262px;width:1px;height:3px;background:#9a9a9a"></div>
<div class="a" style="left:122px;top:262px;width:1px;height:3px;background:#9a9a9a"></div>
<div class="a" style="left:130px;top:262px;width:1px;height:3px;background:#9a9a9a"></div>
<div class="a" style="left:138px;top:262px;width:1px;height:3px;background:#9a9a9a"></div>
<div class="a" style="left:145px;top:262px;width:1px;height:3px;background:#9a9a9a"></div>
<div class="a" style="left:152px;top:262px;width:1px;height:3px;background:#9a9a9a"></div>
<div class="a" style="left:160px;top:262px;width:1px;height:3px;background:#9a9a9a"></div>
<div class="a" style="left:168px;top:262px;width:1px;height:3px;background:#9a9a9a"></div>
<div class="a" style="left:175px;top:260px;width:1px;height:5px;background:#9a9a9a"></div>
<svg style="left:131.5px;top:259px" width="11" height="11"><circle cx="5.5" cy="5.5" r="5" fill="#4a5ad6"/><circle cx="5.5" cy="6" r="1.4" fill="#8a98f0"/></svg>
<div class="a t" style="left:100px;top:246px;font-size:11px;font-weight:bold">&#8211;</div>
<div class="a t" style="left:168px;top:246px;font-size:12px">+</div>
<div class="a" style="left:100px;top:294px;width:76px;height:3px;background:#8c8c8c"></div>
<div class="a" style="left:100px;top:290px;width:1px;height:5px;background:#9a9a9a"></div>
<div class="a" style="left:108px;top:292px;width:1px;height:3px;background:#9a9a9a"></div>
<div class="a" style="left:115px;top:292px;width:1px;height:3px;background:#9a9a9a"></div>
<div class="a" style="left:122px;top:292px;width:1px;height:3px;background:#9a9a9a"></div>
<div class="a" style="left:130px;top:292px;width:1px;height:3px;background:#9a9a9a"></div>
<div class="a" style="left:138px;top:292px;width:1px;height:3px;background:#9a9a9a"></div>
<div class="a" style="left:145px;top:292px;width:1px;height:3px;background:#9a9a9a"></div>
<div class="a" style="left:152px;top:292px;width:1px;height:3px;background:#9a9a9a"></div>
<div class="a" style="left:160px;top:292px;width:1px;height:3px;background:#9a9a9a"></div>
<div class="a" style="left:168px;top:292px;width:1px;height:3px;background:#9a9a9a"></div>
<div class="a" style="left:175px;top:290px;width:1px;height:5px;background:#9a9a9a"></div>
<svg style="left:131.5px;top:289px" width="11" height="11"><circle cx="5.5" cy="5.5" r="5" fill="#4a5ad6"/><circle cx="5.5" cy="6" r="1.4" fill="#8a98f0"/></svg>
<div class="a t" style="left:100px;top:277px;font-size:11px">L</div>
<div class="a t" style="left:167px;top:277px;font-size:11px">R</div>
<div class="a t" style="left:92px;top:309px;font-size:11px;color:#222">Mono, 44100Hz</div>
<div class="a t" style="left:92px;top:320px;font-size:11px;color:#222">32-bit float</div>
<div class="a" style="left:89px;top:336px;width:18px;height:18px;background:#d0dbf0;border-right:1px solid #707070;border-bottom:1px solid #707070;box-shadow:inset 1px 1px 0 #fff"></div>
<div class="a" style="left:107px;top:336px;width:59px;height:18px;background:#d0dbf0;border-right:1px solid #707070;border-bottom:1px solid #707070;box-shadow:inset 1px 1px 0 #fff"></div>
<svg style="left:92px;top:341px" width="12" height="7"><path d="M0 6.5H11.5L5.75 0.5Z" fill="#000"/></svg>
<div class="a t" style="left:123px;top:338px;font-size:11px;color:#222">Select</div>
<div class="a" style="left:184px;top:211px;width:1px;height:143px;background:#000"></div>
<div class="a" style="left:185px;top:211px;width:31px;height:143px;background:#f7f9fd"></div>
<div class="a" style="left:215px;top:211px;width:1px;height:143px;background:#a0a0a0"></div>
<div class="a t" style="left:170px;top:211px;width:40px;text-align:right;font-size:12px;font-weight:bold">1.0</div>
<div class="a t" style="left:170px;top:240px;width:40px;text-align:right;font-size:12px;font-weight:normal">0.5</div>
<div class="a" style="left:211px;top:247px;width:4px;height:1px;background:#000"></div>
<div class="a t" style="left:170px;top:275.5px;width:40px;text-align:right;font-size:12px;font-weight:bold">0.0</div>
<div class="a" style="left:211px;top:282px;width:4px;height:1px;background:#000"></div>
<div class="a t" style="left:170px;top:311.5px;width:40px;text-align:right;font-size:12px;font-weight:normal">-0.5</div>
<div class="a" style="left:211px;top:318px;width:4px;height:1px;background:#000"></div>
<div class="a t" style="left:170px;top:338.5px;width:40px;text-align:right;font-size:12px;font-weight:bold">-1.0</div>
<div class="a" style="left:216px;top:211px;width:769px;height:143px;background:#c0c0c0"></div>
<svg style="left:216px;top:211px" width="769" height="143"><path d="M0.5 65.8V77.6M1.5 63.7V79.4M2.5 62.9V80.3M3.5 61.5V80.8M4.5 64.1V78.0M5.5 64.2V78.6M6.5 66.3V76.5M7.5 66.7V76.0M8.5 67.4V75.1M9.5 66.7V76.2M10.5 68.5V74.2M11.5 68.7V73.9M12.5 70.8V72.1M13.5 67.2V76.1M14.5 70.2V73.2M15.5 64.0V81.2M16.5 63.8V80.5M17.5 67.3V76.0M18.5 66.9V76.8M19.5 66.7V77.5M20.5 70.6V72.6M21.5 62.0V81.7M22.5 64.9V79.1M23.5 67.0V76.1M24.5 70.1V73.0M25.5 70.8V72.2M26.5 70.0V72.8M27.5 69.3V72.7M28.5 67.9V72.9M29.5 65.7V73.9M30.5 64.2V74.5M31.5 66.5V73.8M32.5 70.3V72.2M33.5 69.2V73.4M34.5 62.9V79.2M35.5 61.0V81.7M36.5 51.8V89.9M37.5 37.6V101.6M38.5 52.1V87.9M39.5 50.9V89.6M40.5 54.4V90.2M41.5 59.5V86.0M42.5 54.0V91.1M43.5 61.0V83.0M44.5 61.3V81.7M45.5 69.8V73.0M46.5 61.4V80.5M47.5 61.2V81.3M48.5 56.5V85.4M49.5 62.2V80.0M50.5 59.9V81.5M51.5 69.0V73.3M52.5 63.4V76.9M53.5 60.3V77.9M54.5 70.4V72.3M55.5 66.8V75.2M56.5 65.0V76.7M57.5 66.4V75.6M58.5 65.7V75.6M59.5 64.4V76.9M60.5 63.1V78.0M61.5 67.3V75.2M62.5 67.8V74.5M63.5 67.5V74.5M64.5 69.0V73.4M65.5 68.9V73.9M66.5 71.0V72.0M67.5 63.3V78.5M68.5 69.2V73.6M69.5 52.7V89.5M70.5 43.6V94.6M71.5 44.1V91.9M72.5 49.2V93.6M73.5 43.9V93.9M74.5 45.2V92.7M75.5 41.6V94.0M76.5 46.8V90.2M77.5 55.3V83.0M78.5 66.1V75.2M79.5 61.8V80.3M80.5 68.3V74.6M81.5 46.7V96.4M82.5 68.0V75.6M83.5 49.4V90.0M84.5 39.8V87.1M85.5 21.0V96.7M86.5 35.5V93.4M87.5 27.1V102.3M88.5 10.0V110.7M89.5 12.5V110.2M90.5 56.9V81.4M91.5 32.8V99.6M92.5 46.3V89.5M93.5 33.7V94.3M94.5 65.8V74.7M95.5 33.9V93.9M96.5 61.6V79.1M97.5 36.5V97.2M98.5 43.3V88.1M99.5 38.0V94.0M100.5 49.0V89.2M101.5 54.3V82.7M102.5 51.8V84.2M103.5 48.8V84.8M104.5 66.4V74.6M105.5 62.6V78.0M106.5 61.5V78.8M107.5 61.6V79.5M108.5 61.9V80.6M109.5 63.4V78.0M110.5 58.8V82.5M111.5 67.3V75.3M112.5 56.2V83.6M113.5 68.4V73.3M114.5 55.0V81.7M115.5 61.1V78.0M116.5 60.8V78.3M117.5 57.8V80.9M118.5 61.5V79.9M119.5 58.6V81.3M120.5 57.1V83.0M121.5 68.9V73.7M122.5 57.9V82.2M123.5 59.1V80.5M124.5 59.7V82.0M125.5 60.0V82.2M126.5 60.8V80.1M127.5 55.3V85.5M128.5 53.1V88.8M129.5 50.2V90.9M130.5 43.0V96.7M131.5 46.8V90.9M132.5 40.2V101.3M133.5 69.3V74.9M134.5 53.1V97.3M135.5 50.7V94.8M136.5 53.8V91.5M137.5 41.8V95.6M138.5 38.0V101.1M139.5 42.9V96.0M140.5 39.6V97.9M141.5 43.4V100.6M142.5 43.1V100.5M143.5 43.3V98.6M144.5 45.3V93.5M145.5 58.6V82.1M146.5 69.2V73.7M147.5 71.0V72.0M148.5 71.0V72.0M149.5 71.0V72.0M150.5 71.0V72.0M151.5 71.0V72.0M152.5 60.1V84.0M153.5 45.1V100.4M154.5 51.7V97.4M155.5 51.7V95.0M156.5 54.2V88.7M157.5 52.8V92.0M158.5 53.4V87.4M159.5 56.6V89.3M160.5 53.6V86.8M161.5 55.3V85.0M162.5 54.3V86.8M163.5 61.3V81.7M164.5 65.4V77.4M165.5 69.7V73.1M166.5 71.0V72.0M167.5 71.0V72.0M168.5 71.0V72.0M169.5 71.0V72.0M170.5 71.0V72.0M171.5 71.0V72.0M172.5 71.0V72.0M173.5 71.0V72.0M174.5 71.0V72.0M175.5 71.0V72.0M176.5 71.0V72.0M177.5 71.0V72.0M178.5 71.0V72.0M179.5 70.2V72.8M180.5 68.5V74.3M181.5 56.5V86.2M182.5 58.3V84.6M183.5 62.0V80.7M184.5 61.6V81.6M185.5 69.5V73.4M186.5 69.8V72.9M187.5 59.6V81.9M188.5 60.8V81.0M189.5 60.2V80.6M190.5 59.0V81.4M191.5 67.4V74.7M192.5 69.6V72.9M193.5 57.5V81.9M194.5 62.3V78.9M195.5 61.3V79.6M196.5 61.3V79.8M197.5 62.1V79.9M198.5 68.2V74.6M199.5 68.3V74.8M200.5 61.1V81.8M201.5 65.3V77.2M202.5 66.1V76.7M203.5 65.2V77.1M204.5 68.1V75.3M205.5 68.4V75.4M206.5 71.0V72.2M207.5 64.7V78.3M208.5 68.2V74.4M209.5 58.7V83.2M210.5 61.7V80.8M211.5 63.7V78.2M212.5 62.4V80.8M213.5 64.1V77.8M214.5 65.0V77.4M215.5 61.6V80.0M216.5 70.0V72.7M217.5 70.1V72.6M218.5 68.9V73.5M219.5 61.4V78.4M220.5 60.1V79.1M221.5 63.1V77.2M222.5 65.9V74.9M223.5 67.0V74.7M224.5 66.4V75.4M225.5 67.0V75.3M226.5 69.4V73.3M227.5 70.2V72.7M228.5 61.0V80.1M229.5 57.3V83.7M230.5 59.7V81.9M231.5 68.1V74.3M232.5 66.6V75.8M233.5 69.5V73.3M234.5 57.3V83.7M235.5 61.9V79.6M236.5 59.5V82.2M237.5 58.5V82.1M238.5 61.7V80.2M239.5 60.5V81.1M240.5 60.3V82.5M241.5 61.2V82.1M242.5 61.9V80.1M243.5 62.5V79.7M244.5 59.5V82.1M245.5 61.5V80.0M246.5 56.5V83.6M247.5 58.4V80.9M248.5 67.9V74.3M249.5 62.1V79.5M250.5 65.5V76.2M251.5 65.8V75.8M252.5 67.1V75.0M253.5 68.5V73.6M254.5 65.1V76.8M255.5 63.1V78.5M256.5 69.6V73.3M257.5 57.1V84.6M258.5 60.1V81.4M259.5 60.5V80.1M260.5 68.3V73.9M261.5 67.7V74.2M262.5 51.6V85.3M263.5 56.5V82.3M264.5 51.2V87.1M265.5 54.6V85.5M266.5 44.5V95.6M267.5 52.1V88.8M268.5 50.8V86.8M269.5 54.7V83.7M270.5 54.7V81.8M271.5 54.7V81.7M272.5 67.0V74.2M273.5 68.1V73.3M274.5 58.5V78.6M275.5 56.7V80.7M276.5 59.6V79.5M277.5 60.4V79.6M278.5 58.7V82.3M279.5 69.3V73.2M280.5 70.8V72.1M281.5 65.5V77.4M282.5 60.7V82.4M283.5 50.1V91.2M284.5 40.4V99.9M285.5 37.0V106.7M286.5 38.5V100.3M287.5 42.4V100.1M288.5 48.2V91.2M289.5 51.7V88.5M290.5 59.1V82.1M291.5 63.0V79.4M292.5 67.1V75.7M293.5 67.6V75.9M294.5 62.1V81.2M295.5 64.3V78.6M296.5 40.7V94.4M297.5 40.6V99.1M298.5 44.1V95.4M299.5 49.4V88.9M300.5 52.6V86.3M301.5 57.2V82.9M302.5 60.5V79.4M303.5 61.6V79.4M304.5 70.2V72.5M305.5 70.4V72.3M306.5 65.5V77.1M307.5 64.3V80.0M308.5 61.2V83.0M309.5 68.5V75.1M310.5 69.3V73.9M311.5 56.4V89.1M312.5 54.5V93.2M313.5 50.5V97.8M314.5 54.3V91.8M315.5 60.3V83.6M316.5 69.0V73.9M317.5 54.4V87.0M318.5 57.8V82.3M319.5 68.4V74.0M320.5 67.7V74.7M321.5 56.4V82.1M322.5 53.7V84.4M323.5 57.4V80.7M324.5 59.6V79.3M325.5 59.5V79.5M326.5 55.2V82.6M327.5 69.6V72.8M328.5 67.8V75.1M329.5 58.2V85.6M330.5 59.0V82.9M331.5 55.9V87.3M332.5 56.5V86.6M333.5 57.9V84.4M334.5 57.4V86.9M335.5 46.2V94.3M336.5 62.5V79.2M337.5 65.9V75.9M338.5 40.7V97.0M339.5 55.5V87.1M340.5 51.6V89.7M341.5 57.0V84.2M342.5 56.8V83.3M343.5 63.1V78.4M344.5 62.9V78.7M345.5 69.0V73.5M346.5 66.4V75.6M347.5 64.5V76.4M348.5 59.6V79.4M349.5 67.8V74.1M350.5 60.1V79.3M351.5 36.3V97.4M352.5 18.5V107.3M353.5 36.3V96.7M354.5 24.8V105.4M355.5 37.2V101.0M356.5 65.5V76.6M357.5 41.7V97.2M358.5 56.3V84.1M359.5 55.9V84.7M360.5 57.3V84.0M361.5 58.2V84.6M362.5 54.2V88.4M363.5 55.4V89.0M364.5 66.3V77.7M365.5 59.4V86.1M366.5 59.6V87.7M367.5 52.0V95.2M368.5 56.8V87.8M369.5 57.4V87.0M370.5 69.2V74.2M371.5 61.2V82.6M372.5 59.7V85.2M373.5 67.7V75.7M374.5 58.9V84.5M375.5 61.4V81.7M376.5 59.1V83.5M377.5 66.8V76.2M378.5 58.0V84.5M379.5 57.3V84.3M380.5 56.3V85.1M381.5 63.6V78.5M382.5 70.9V72.1M383.5 68.9V73.6M384.5 63.1V78.0M385.5 55.3V84.5M386.5 44.1V91.8M387.5 32.7V100.1M388.5 62.6V78.0M389.5 43.3V94.3M390.5 36.1V98.2M391.5 60.6V78.9M392.5 37.9V94.0M393.5 40.2V94.4M394.5 35.4V95.6M395.5 42.7V89.0M396.5 48.9V87.4M397.5 34.5V94.8M398.5 41.6V91.3M399.5 29.2V97.9M400.5 66.3V75.1M401.5 41.9V90.6M402.5 42.2V92.9M403.5 51.2V88.8M404.5 48.0V90.9M405.5 48.9V90.2M406.5 49.4V89.5M407.5 57.0V82.7M408.5 69.1V73.6M409.5 66.1V75.5M410.5 65.4V76.3M411.5 62.7V80.0M412.5 57.6V82.3M413.5 48.0V91.5M414.5 38.4V100.8M415.5 44.2V96.2M416.5 67.5V74.8M417.5 56.6V84.6M418.5 54.4V85.7M419.5 56.9V83.5M420.5 56.5V85.4M421.5 56.7V85.0M422.5 52.3V89.3M423.5 49.2V92.0M424.5 44.1V98.9M425.5 45.5V95.7M426.5 53.9V92.1M427.5 47.1V99.7M428.5 51.4V94.8M429.5 49.3V96.3M430.5 67.2V76.1M431.5 66.6V76.7M432.5 51.7V90.3M433.5 49.4V87.2M434.5 40.9V89.0M435.5 35.1V92.5M436.5 49.4V84.5M437.5 59.1V82.2M438.5 51.4V86.9M439.5 63.6V77.2M440.5 42.2V92.9M441.5 67.5V74.8M442.5 56.4V83.7M443.5 48.7V86.8M444.5 35.0V94.4M445.5 49.2V84.9M446.5 46.2V87.5M447.5 55.7V82.4M448.5 59.7V81.0M449.5 60.0V81.9M450.5 62.5V80.1M451.5 64.1V77.9M452.5 60.8V80.6M453.5 63.4V78.6M454.5 63.7V79.2M455.5 63.0V78.7M456.5 69.2V73.5M457.5 69.5V73.3M458.5 64.0V78.1M459.5 61.5V80.7M460.5 63.0V79.4M461.5 63.9V78.8M462.5 68.6V74.7M463.5 64.6V78.8M464.5 59.0V83.7M465.5 57.7V82.6M466.5 57.7V80.0M467.5 54.5V81.7M468.5 52.9V82.9M469.5 67.6V74.0M470.5 60.0V79.6M471.5 64.2V76.7M472.5 63.3V78.5M473.5 63.1V78.2M474.5 61.1V78.3M475.5 58.1V81.9M476.5 58.6V80.3M477.5 55.8V82.5M478.5 67.9V74.0M479.5 68.7V73.8M480.5 62.6V79.7M481.5 62.0V79.5M482.5 61.3V81.5M483.5 70.3V72.6M484.5 64.6V78.6M485.5 65.6V77.8M486.5 65.9V76.3M487.5 65.4V77.4M488.5 64.6V78.2M489.5 70.5V72.4M490.5 70.0V72.8M491.5 66.6V76.0M492.5 66.3V76.7M493.5 66.2V76.0M494.5 65.2V76.7M495.5 67.2V74.8M496.5 67.3V74.9M497.5 66.6V75.1M498.5 69.9V72.6M499.5 60.7V79.6M500.5 52.8V84.6M501.5 67.4V74.5M502.5 68.6V73.4M503.5 69.0V73.2M504.5 61.2V77.7M505.5 63.9V77.4M506.5 65.9V74.9M507.5 65.4V75.6M508.5 66.9V74.8M509.5 64.8V76.6M510.5 65.3V76.4M511.5 68.6V74.0M512.5 68.5V74.0M513.5 70.3V72.6M514.5 64.1V78.7M515.5 60.9V81.1M516.5 69.2V73.6M517.5 65.8V77.1M518.5 66.2V76.0M519.5 65.4V77.6M520.5 66.3V76.8M521.5 65.5V78.7M522.5 66.4V78.8M523.5 69.9V73.3M524.5 63.1V82.2M525.5 63.9V81.6M526.5 62.1V81.1M527.5 64.5V79.3M528.5 60.1V83.5M529.5 62.7V79.6M530.5 68.9V73.9M531.5 69.5V73.1M532.5 65.0V76.7M533.5 66.0V75.8M534.5 64.3V77.6M535.5 62.0V79.1M536.5 62.2V78.8M537.5 60.1V80.5M538.5 61.8V79.9M539.5 60.1V82.0M540.5 57.5V84.4M541.5 69.5V73.2M542.5 68.6V74.3M543.5 65.0V77.7M544.5 62.1V79.9M545.5 66.0V76.6M546.5 66.1V76.4M547.5 65.0V77.1M548.5 66.2V76.4M549.5 70.1V72.9M550.5 69.5V73.4M551.5 70.9V72.1M552.5 67.8V75.1M553.5 66.6V76.3M554.5 68.5V74.4M555.5 68.8V74.3M556.5 70.6V72.6M557.5 71.0V72.1M558.5 70.8V72.4M559.5 66.6V77.3M560.5 64.8V79.3M561.5 64.5V80.2M562.5 69.3V74.1M563.5 57.7V86.8M564.5 60.5V83.8M565.5 61.3V82.9M566.5 62.1V80.9M567.5 64.0V78.8M568.5 69.7V73.2M569.5 59.5V81.0M570.5 52.3V87.0M571.5 43.4V91.5M572.5 63.8V76.9M573.5 71.0V72.0M574.5 71.0V72.0M575.5 71.0V72.0M576.5 71.0V72.0M577.5 71.0V72.0M578.5 71.0V72.0M579.5 71.0V72.0M580.5 71.0V72.0M581.5 71.0V72.0M582.5 71.0V72.0M583.5 71.0V72.0M584.5 71.0V72.0M585.5 65.8V75.9M586.5 54.6V84.6M587.5 61.4V79.3M588.5 69.8V72.9M589.5 70.8V72.1M590.5 66.3V75.8M591.5 68.8V73.8M592.5 69.0V74.0M593.5 69.4V73.4M594.5 66.9V75.8M595.5 66.7V75.6M596.5 70.3V72.8M597.5 69.2V73.7M598.5 69.7V73.1M599.5 56.3V85.6M600.5 58.4V83.5M601.5 56.8V85.1M602.5 61.0V80.7M603.5 62.8V80.4M604.5 61.8V81.8M605.5 62.1V80.1M606.5 69.2V73.5M607.5 69.5V73.2M608.5 63.4V78.1M609.5 65.4V77.0M610.5 63.5V78.4M611.5 64.6V78.0M612.5 69.2V73.3M613.5 70.4V72.5M614.5 68.6V74.0M615.5 64.8V78.4M616.5 62.2V79.7M617.5 64.7V77.0M618.5 66.0V76.7M619.5 65.1V76.8M620.5 65.4V76.6M621.5 66.6V75.6M622.5 69.4V73.2M623.5 64.9V77.0M624.5 66.4V75.8M625.5 66.9V76.0M626.5 67.8V74.5M627.5 68.7V74.1M628.5 68.5V74.3M629.5 71.0V72.0M630.5 71.0V72.0M631.5 66.4V76.1M632.5 63.8V78.9M633.5 57.2V85.5M634.5 53.9V86.8M635.5 44.3V98.7M636.5 43.0V101.9M637.5 37.6V112.2M638.5 47.8V98.7M639.5 47.8V91.7M640.5 38.1V101.0M641.5 23.9V108.1M642.5 28.4V108.2M643.5 49.0V90.9M644.5 54.1V87.8M645.5 69.4V73.9M646.5 58.7V85.8M647.5 68.1V76.0M648.5 59.2V85.5M649.5 53.8V93.1M650.5 53.7V89.8M651.5 65.3V77.7M652.5 62.1V79.7M653.5 42.8V94.9M654.5 55.6V85.2M655.5 55.0V86.8M656.5 60.3V84.2M657.5 50.3V91.7M658.5 45.0V95.0M659.5 32.4V100.0M660.5 23.2V108.4M661.5 42.3V93.0M662.5 48.3V89.5M663.5 51.7V88.9M664.5 66.0V76.8M665.5 56.3V88.4M666.5 63.4V80.7M667.5 62.5V79.6M668.5 66.6V75.9M669.5 71.0V72.0M670.5 71.0V72.0M671.5 71.0V72.0M672.5 71.0V72.0M673.5 71.0V72.0M674.5 61.1V80.9M675.5 49.4V91.8M676.5 26.7V111.2M677.5 44.6V94.6M678.5 64.6V75.9M679.5 48.1V87.4M680.5 67.0V75.3M681.5 59.5V83.1M682.5 59.2V85.4M683.5 54.8V89.2M684.5 48.3V92.3M685.5 48.4V89.0M686.5 43.0V94.3M687.5 35.0V98.9M688.5 63.9V78.0M689.5 56.3V85.6M690.5 56.1V84.7M691.5 56.4V83.8M692.5 67.6V74.5M693.5 48.4V88.5M694.5 67.6V74.9M695.5 60.7V80.1M696.5 61.2V80.6M697.5 57.7V82.3M698.5 58.3V80.8M699.5 55.1V81.1M700.5 48.1V84.1M701.5 51.6V85.5M702.5 69.1V73.5M703.5 61.5V80.7M704.5 63.1V79.6M705.5 58.8V83.7M706.5 58.4V82.1M707.5 53.8V85.4M708.5 56.8V83.1M709.5 61.7V79.3M710.5 56.3V82.3M711.5 67.1V74.0M712.5 57.5V79.8M713.5 63.2V76.8M714.5 68.5V73.5M715.5 69.5V73.1M716.5 63.6V77.1M717.5 59.4V79.5M718.5 59.0V80.2M719.5 49.5V87.9M720.5 66.5V75.0M721.5 62.3V78.2M722.5 49.3V87.3M723.5 57.2V82.0M724.5 62.5V77.7M725.5 65.4V75.9M726.5 64.5V77.1M727.5 65.3V76.2M728.5 69.9V72.6M729.5 64.3V77.1M730.5 63.6V77.5M731.5 59.7V80.5M732.5 68.6V74.0M733.5 67.8V74.5M734.5 60.1V80.8M735.5 60.3V81.4M736.5 60.4V81.4M737.5 58.5V82.9M738.5 53.5V87.7M739.5 53.2V84.6M740.5 49.6V86.6M741.5 45.2V86.3M742.5 35.4V90.6M743.5 19.3V98.3M744.5 43.2V87.0M745.5 52.5V85.6M746.5 49.2V90.4M747.5 59.1V83.3M748.5 59.6V82.5M749.5 62.3V81.4M750.5 70.5V72.5M751.5 70.9V72.1M752.5 67.6V75.1M753.5 66.4V76.3M754.5 63.9V79.6M755.5 63.1V79.6M756.5 58.6V83.9M757.5 54.5V86.8M758.5 49.4V90.8M759.5 65.6V76.6M760.5 50.9V86.3M761.5 53.4V85.8M762.5 52.3V83.4M763.5 49.8V84.5M764.5 48.4V85.9M765.5 58.7V80.9M766.5 69.5V73.1M767.5 65.3V76.6M768.5 67.3V74.6" stroke="#3232c8" stroke-width="1" fill="none"/><path d="M0.5 70.5V72.5M1.5 70.2V72.8M2.5 70.0V73.0M3.5 69.9V73.1M4.5 70.3V72.7M5.5 70.3V72.7M6.5 70.6V72.4M7.5 70.7V72.3M8.5 70.9V72.1M9.5 70.7V72.3M10.5 71.0V72.0M11.5 71.0V72.0M12.5 71.0V72.0M13.5 70.7V72.3M14.5 71.0V72.0M15.5 70.0V73.0M16.5 70.1V72.9M17.5 70.8V72.2M18.5 70.7V72.3M19.5 70.6V72.4M20.5 71.0V72.0M21.5 69.8V73.2M22.5 70.3V72.7M23.5 70.7V72.3M24.5 71.0V72.0M25.5 71.0V72.0M26.5 71.0V72.0M27.5 71.0V72.0M28.5 71.0V72.0M29.5 70.8V72.2M30.5 70.6V72.4M31.5 70.9V72.1M32.5 71.0V72.0M33.5 71.0V72.0M34.5 70.1V72.9M35.5 69.7V73.3M36.5 68.3V74.7M37.5 67.0V76.0M38.5 68.5V74.5M39.5 68.2V74.8M40.5 68.5V74.5M41.5 69.2V73.8M42.5 68.3V74.7M43.5 69.6V73.4M44.5 69.8V73.2M45.5 71.0V72.0M46.5 69.9V73.1M47.5 69.8V73.2M48.5 69.0V74.0M49.5 70.0V73.0M50.5 69.7V73.3M51.5 71.0V72.0M52.5 70.4V72.6M53.5 70.0V73.0M54.5 71.0V72.0M55.5 70.8V72.2M56.5 70.5V72.5M57.5 70.7V72.3M58.5 70.7V72.3M59.5 70.4V72.6M60.5 70.2V72.8M61.5 70.8V72.2M62.5 70.9V72.1M63.5 70.9V72.1M64.5 71.0V72.0M65.5 71.0V72.0M66.5 71.0V72.0M67.5 70.2V72.8M68.5 71.0V72.0M69.5 68.4V74.6M70.5 67.2V75.8M71.5 67.4V75.6M72.5 67.7V75.3M73.5 67.2V75.8M74.5 67.5V75.5M75.5 67.0V76.0M76.5 67.8V75.2M77.5 69.1V73.9M78.5 70.7V72.3M79.5 69.9V73.1M80.5 71.0V72.0M81.5 67.3V75.7M82.5 70.9V72.1M83.5 68.1V74.9M84.5 67.5V75.5M85.5 67.0V76.0M86.5 67.0V76.0M87.5 67.0V76.0M88.5 67.0V76.0M89.5 67.0V76.0M90.5 69.4V73.6M91.5 67.0V76.0M92.5 67.8V75.2M93.5 67.0V76.0M94.5 70.7V72.3M95.5 67.0V76.0M96.5 70.0V73.0M97.5 67.0V76.0M98.5 67.7V75.3M99.5 67.0V76.0M100.5 68.1V74.9M101.5 69.1V73.9M102.5 68.7V74.3M103.5 68.4V74.6M104.5 70.8V72.2M105.5 70.2V72.8M106.5 70.0V73.0M107.5 70.0V73.0M108.5 69.9V73.1M109.5 70.3V72.7M110.5 69.5V73.5M111.5 70.8V72.2M112.5 69.2V73.8M113.5 71.0V72.0M114.5 69.2V73.8M115.5 70.1V72.9M116.5 70.0V73.0M117.5 69.5V73.5M118.5 69.9V73.1M119.5 69.6V73.4M120.5 69.3V73.7M121.5 71.0V72.0M122.5 69.4V73.6M123.5 69.7V73.3M124.5 69.6V73.4M125.5 69.6V73.4M126.5 69.9V73.1M127.5 68.9V74.1M128.5 68.5V74.5M129.5 68.0V75.0M130.5 67.0V76.0M131.5 67.7V75.3M132.5 67.0V76.0M133.5 71.0V72.0M134.5 67.7V75.3M135.5 67.8V75.2M136.5 68.3V74.7M137.5 67.0V76.0M138.5 67.0V76.0M139.5 67.0V76.0M140.5 67.0V76.0M141.5 67.0V76.0M142.5 67.0V76.0M143.5 67.0V76.0M144.5 67.4V75.6M145.5 69.5V73.5M146.5 71.0V72.0M147.5 71.0V72.0M148.5 71.0V72.0M149.5 71.0V72.0M150.5 71.0V72.0M151.5 71.0V72.0M152.5 69.5V73.5M153.5 67.0V76.0M154.5 67.6V75.4M155.5 67.8V75.2M156.5 68.6V74.4M157.5 68.2V74.8M158.5 68.6V74.4M159.5 68.7V74.3M160.5 68.7V74.3M161.5 69.0V74.0M162.5 68.7V74.3M163.5 69.8V73.2M164.5 70.5V72.5M165.5 71.0V72.0M166.5 71.0V72.0M167.5 71.0V72.0M168.5 71.0V72.0M169.5 71.0V72.0M170.5 71.0V72.0M171.5 71.0V72.0M172.5 71.0V72.0M173.5 71.0V72.0M174.5 71.0V72.0M175.5 71.0V72.0M176.5 71.0V72.0M177.5 71.0V72.0M178.5 71.0V72.0M179.5 71.0V72.0M180.5 71.0V72.0M181.5 69.0V74.0M182.5 69.3V73.7M183.5 69.9V73.1M184.5 69.8V73.2M185.5 71.0V72.0M186.5 71.0V72.0M187.5 69.6V73.4M188.5 69.8V73.2M189.5 69.8V73.2M190.5 69.6V73.4M191.5 70.9V72.1M192.5 71.0V72.0M193.5 69.4V73.6M194.5 70.1V72.9M195.5 69.9V73.1M196.5 69.9V73.1M197.5 70.0V73.0M198.5 71.0V72.0M199.5 70.9V72.1M200.5 69.7V73.3M201.5 70.5V72.5M202.5 70.6V72.4M203.5 70.5V72.5M204.5 70.9V72.1M205.5 70.9V72.1M206.5 71.0V72.0M207.5 70.3V72.7M208.5 71.0V72.0M209.5 69.4V73.6M210.5 69.9V73.1M211.5 70.3V72.7M212.5 69.9V73.1M213.5 70.3V72.7M214.5 70.4V72.6M215.5 69.9V73.1M216.5 71.0V72.0M217.5 71.0V72.0M218.5 71.0V72.0M219.5 70.1V72.9M220.5 69.9V73.1M221.5 70.3V72.7M222.5 70.7V72.3M223.5 70.8V72.2M224.5 70.7V72.3M225.5 70.8V72.2M226.5 71.0V72.0M227.5 71.0V72.0M228.5 69.9V73.1M229.5 69.2V73.8M230.5 69.6V73.4M231.5 71.0V72.0M232.5 70.7V72.3M233.5 71.0V72.0M234.5 69.2V73.8M235.5 70.0V73.0M236.5 69.6V73.4M237.5 69.5V73.5M238.5 69.9V73.1M239.5 69.7V73.3M240.5 69.6V73.4M241.5 69.7V73.3M242.5 70.0V73.0M243.5 70.0V73.0M244.5 69.6V73.4M245.5 69.9V73.1M246.5 69.2V73.8M247.5 69.6V73.4M248.5 71.0V72.0M249.5 70.0V73.0M250.5 70.6V72.4M251.5 70.7V72.3M252.5 70.8V72.2M253.5 71.0V72.0M254.5 70.5V72.5M255.5 70.2V72.8M256.5 71.0V72.0M257.5 69.2V73.8M258.5 69.7V73.3M259.5 69.8V73.2M260.5 71.0V72.0M261.5 70.9V72.1M262.5 68.6V74.4M263.5 69.3V73.7M264.5 68.5V74.5M265.5 68.9V74.1M266.5 67.2V75.8M267.5 68.4V74.6M268.5 68.4V74.6M269.5 69.0V74.0M270.5 69.2V73.8M271.5 69.2V73.8M272.5 70.9V72.1M273.5 71.0V72.0M274.5 69.8V73.2M275.5 69.5V73.5M276.5 69.8V73.2M277.5 69.9V73.1M278.5 69.5V73.5M279.5 71.0V72.0M280.5 71.0V72.0M281.5 70.5V72.5M282.5 69.7V73.3M283.5 68.0V75.0M284.5 67.0V76.0M285.5 67.0V76.0M286.5 67.0V76.0M287.5 67.0V76.0M288.5 67.8V75.2M289.5 68.4V74.6M290.5 69.5V73.5M291.5 70.1V72.9M292.5 70.8V72.2M293.5 70.8V72.2M294.5 69.9V73.1M295.5 70.3V72.7M296.5 67.0V76.0M297.5 67.0V76.0M298.5 67.1V75.9M299.5 68.1V74.9M300.5 68.6V74.4M301.5 69.3V73.7M302.5 69.9V73.1M303.5 70.0V73.0M304.5 71.0V72.0M305.5 71.0V72.0M306.5 70.5V72.5M307.5 70.2V72.8M308.5 69.6V73.4M309.5 70.9V72.1M310.5 71.0V72.0M311.5 68.7V74.3M312.5 68.2V74.8M313.5 67.5V75.5M314.5 68.3V74.7M315.5 69.5V73.5M316.5 71.0V72.0M317.5 68.7V74.3M318.5 69.4V73.6M319.5 71.0V72.0M320.5 70.9V72.1M321.5 69.3V73.7M322.5 68.9V74.1M323.5 69.5V73.5M324.5 69.8V73.2M325.5 69.8V73.2M326.5 69.2V73.8M327.5 71.0V72.0M328.5 70.9V72.1M329.5 69.2V73.8M330.5 69.5V73.5M331.5 68.8V74.2M332.5 68.9V74.1M333.5 69.2V73.8M334.5 69.0V74.0M335.5 67.4V75.6M336.5 70.1V72.9M337.5 70.7V72.3M338.5 67.0V76.0M339.5 68.8V74.2M340.5 68.3V74.7M341.5 69.2V73.8M342.5 69.2V73.8M343.5 70.2V72.8M344.5 70.2V72.8M345.5 71.0V72.0M346.5 70.7V72.3M347.5 70.5V72.5M348.5 69.8V73.2M349.5 71.0V72.0M350.5 69.9V73.1M351.5 67.0V76.0M352.5 67.0V76.0M353.5 67.0V76.0M354.5 67.0V76.0M355.5 67.0V76.0M356.5 70.6V72.4M357.5 67.0V76.0M358.5 69.1V73.9M359.5 69.1V73.9M360.5 69.2V73.8M361.5 69.3V73.7M362.5 68.6V74.4M363.5 68.6V74.4M364.5 70.5V72.5M365.5 69.2V73.8M366.5 69.1V73.9M367.5 67.8V75.2M368.5 68.9V74.1M369.5 69.0V74.0M370.5 71.0V72.0M371.5 69.7V73.3M372.5 69.3V73.7M373.5 70.8V72.2M374.5 69.3V73.7M375.5 69.8V73.2M376.5 69.4V73.6M377.5 70.7V72.3M378.5 69.2V73.8M379.5 69.2V73.8M380.5 69.1V73.9M381.5 70.2V72.8M382.5 71.0V72.0M383.5 71.0V72.0M384.5 70.2V72.8M385.5 69.0V74.0M386.5 67.4V75.6M387.5 67.0V76.0M388.5 70.2V72.8M389.5 67.2V75.8M390.5 67.0V76.0M391.5 69.9V73.1M392.5 67.0V76.0M393.5 67.0V76.0M394.5 67.0V76.0M395.5 67.6V75.4M396.5 68.2V74.8M397.5 67.0V76.0M398.5 67.3V75.7M399.5 67.0V76.0M400.5 70.8V72.2M401.5 67.4V75.6M402.5 67.2V75.8M403.5 68.3V74.7M404.5 67.9V75.1M405.5 68.0V75.0M406.5 68.1V74.9M407.5 69.3V73.7M408.5 71.0V72.0M409.5 70.7V72.3M410.5 70.6V72.4M411.5 70.0V73.0M412.5 69.4V73.6M413.5 67.8V75.2M414.5 67.0V76.0M415.5 67.1V75.9M416.5 70.9V72.1M417.5 69.1V73.9M418.5 68.8V74.2M419.5 69.2V73.8M420.5 69.0V74.0M421.5 69.1V73.9M422.5 68.4V74.6M423.5 67.9V75.1M424.5 67.0V76.0M425.5 67.2V75.8M426.5 68.3V74.7M427.5 67.0V76.0M428.5 67.8V75.2M429.5 67.5V75.5M430.5 70.7V72.3M431.5 70.6V72.4M432.5 68.2V74.8M433.5 68.3V74.7M434.5 67.4V75.6M435.5 67.0V76.0M436.5 68.5V74.5M437.5 69.5V73.5M438.5 68.5V74.5M439.5 70.3V72.7M440.5 67.2V75.8M441.5 70.9V72.1M442.5 69.2V73.8M443.5 68.3V74.7M444.5 67.0V76.0M445.5 68.5V74.5M446.5 68.0V75.0M447.5 69.2V73.8M448.5 69.7V73.3M449.5 69.6V73.4M450.5 70.0V73.0M451.5 70.3V72.7M452.5 69.8V73.2M453.5 70.2V72.8M454.5 70.2V72.8M455.5 70.2V72.8M456.5 71.0V72.0M457.5 71.0V72.0M458.5 70.3V72.7M459.5 69.9V73.1M460.5 70.1V72.9M461.5 70.2V72.8M462.5 71.0V72.0M463.5 70.3V72.7M464.5 69.4V73.6M465.5 69.4V73.6M466.5 69.6V73.4M467.5 69.2V73.8M468.5 69.0V74.0M469.5 71.0V72.0M470.5 69.8V73.2M471.5 70.4V72.6M472.5 70.2V72.8M473.5 70.2V72.8M474.5 70.0V73.0M475.5 69.5V73.5M476.5 69.7V73.3M477.5 69.2V73.8M478.5 71.0V72.0M479.5 71.0V72.0M480.5 70.0V73.0M481.5 70.0V73.0M482.5 69.8V73.2M483.5 71.0V72.0M484.5 70.3V72.7M485.5 70.5V72.5M486.5 70.6V72.4M487.5 70.5V72.5M488.5 70.3V72.7M489.5 71.0V72.0M490.5 71.0V72.0M491.5 70.7V72.3M492.5 70.6V72.4M493.5 70.7V72.3M494.5 70.5V72.5M495.5 70.9V72.1M496.5 70.9V72.1M497.5 70.8V72.2M498.5 71.0V72.0M499.5 69.9V73.1M500.5 68.8V74.2M501.5 70.9V72.1M502.5 71.0V72.0M503.5 71.0V72.0M504.5 70.1V72.9M505.5 70.4V72.6M506.5 70.7V72.3M507.5 70.6V72.4M508.5 70.8V72.2M509.5 70.5V72.5M510.5 70.6V72.4M511.5 71.0V72.0M512.5 71.0V72.0M513.5 71.0V72.0M514.5 70.3V72.7M515.5 69.8V73.2M516.5 71.0V72.0M517.5 70.5V72.5M518.5 70.7V72.3M519.5 70.5V72.5M520.5 70.6V72.4M521.5 70.4V72.6M522.5 70.4V72.6M523.5 71.0V72.0M524.5 69.9V73.1M525.5 70.0V73.0M526.5 69.9V73.1M527.5 70.2V72.8M528.5 69.5V73.5M529.5 70.1V72.9M530.5 71.0V72.0M531.5 71.0V72.0M532.5 70.5V72.5M533.5 70.7V72.3M534.5 70.4V72.6M535.5 70.1V72.9M536.5 70.1V72.9M537.5 69.8V73.2M538.5 70.0V73.0M539.5 69.6V73.4M540.5 69.2V73.8M541.5 71.0V72.0M542.5 71.0V72.0M543.5 70.4V72.6M544.5 70.0V73.0M545.5 70.6V72.4M546.5 70.6V72.4M547.5 70.5V72.5M548.5 70.6V72.4M549.5 71.0V72.0M550.5 71.0V72.0M551.5 71.0V72.0M552.5 70.9V72.1M553.5 70.7V72.3M554.5 71.0V72.0M555.5 71.0V72.0M556.5 71.0V72.0M557.5 71.0V72.0M558.5 71.0V72.0M559.5 70.6V72.4M560.5 70.3V72.7M561.5 70.2V72.8M562.5 71.0V72.0M563.5 69.0V74.0M564.5 69.5V73.5M565.5 69.7V73.3M566.5 69.9V73.1M567.5 70.2V72.8M568.5 71.0V72.0M569.5 69.7V73.3M570.5 68.6V74.4M571.5 67.4V75.6M572.5 70.4V72.6M573.5 71.0V72.0M574.5 71.0V72.0M575.5 71.0V72.0M576.5 71.0V72.0M577.5 71.0V72.0M578.5 71.0V72.0M579.5 71.0V72.0M580.5 71.0V72.0M581.5 71.0V72.0M582.5 71.0V72.0M583.5 71.0V72.0M584.5 71.0V72.0M585.5 70.6V72.4M586.5 68.9V74.1M587.5 70.0V73.0M588.5 71.0V72.0M589.5 71.0V72.0M590.5 70.7V72.3M591.5 71.0V72.0M592.5 71.0V72.0M593.5 71.0V72.0M594.5 70.7V72.3M595.5 70.7V72.3M596.5 71.0V72.0M597.5 71.0V72.0M598.5 71.0V72.0M599.5 69.0V74.0M600.5 69.4V73.6M601.5 69.1V73.9M602.5 69.8V73.2M603.5 70.0V73.0M604.5 69.8V73.2M605.5 70.0V73.0M606.5 71.0V72.0M607.5 71.0V72.0M608.5 70.3V72.7M609.5 70.5V72.5M610.5 70.2V72.8M611.5 70.4V72.6M612.5 71.0V72.0M613.5 71.0V72.0M614.5 71.0V72.0M615.5 70.3V72.7M616.5 70.0V73.0M617.5 70.5V72.5M618.5 70.6V72.4M619.5 70.5V72.5M620.5 70.5V72.5M621.5 70.7V72.3M622.5 71.0V72.0M623.5 70.5V72.5M624.5 70.7V72.3M625.5 70.7V72.3M626.5 70.9V72.1M627.5 71.0V72.0M628.5 71.0V72.0M629.5 71.0V72.0M630.5 71.0V72.0M631.5 70.7V72.3M632.5 70.2V72.8M633.5 69.1V73.9M634.5 68.7V74.3M635.5 67.0V76.0M636.5 67.0V76.0M637.5 67.0V76.0M638.5 67.2V75.8M639.5 67.8V75.2M640.5 67.0V76.0M641.5 67.0V76.0M642.5 67.0V76.0M643.5 67.9V75.1M644.5 68.6V74.4M645.5 71.0V72.0M646.5 69.2V73.8M647.5 70.8V72.2M648.5 69.3V73.7M649.5 68.2V74.8M650.5 68.4V74.6M651.5 70.5V72.5M652.5 70.0V73.0M653.5 67.1V75.9M654.5 69.0V74.0M655.5 68.8V74.2M656.5 69.5V73.5M657.5 68.0V75.0M658.5 67.3V75.7M659.5 67.0V76.0M660.5 67.0V76.0M661.5 67.2V75.8M662.5 68.0V75.0M663.5 68.3V74.7M664.5 70.6V72.4M665.5 68.8V74.2M666.5 70.0V73.0M667.5 70.1V72.9M668.5 70.7V72.3M669.5 71.0V72.0M670.5 71.0V72.0M671.5 71.0V72.0M672.5 71.0V72.0M673.5 71.0V72.0M674.5 69.8V73.2M675.5 67.9V75.1M676.5 67.0V76.0M677.5 67.3V75.7M678.5 70.5V72.5M679.5 68.2V74.8M680.5 70.8V72.2M681.5 69.5V73.5M682.5 69.3V73.7M683.5 68.6V74.4M684.5 67.8V75.2M685.5 68.0V75.0M686.5 67.1V75.9M687.5 67.0V76.0M688.5 70.3V72.7M689.5 69.0V74.0M690.5 69.1V73.9M691.5 69.2V73.8M692.5 70.9V72.1M693.5 68.1V74.9M694.5 70.9V72.1M695.5 69.9V73.1M696.5 69.9V73.1M697.5 69.4V73.6M698.5 69.6V73.4M699.5 69.3V73.7M700.5 68.4V74.6M701.5 68.6V74.4M702.5 71.0V72.0M703.5 69.9V73.1M704.5 70.1V72.9M705.5 69.4V73.6M706.5 69.5V73.5M707.5 68.8V74.2M708.5 69.3V73.7M709.5 70.0V73.0M710.5 69.3V73.7M711.5 70.9V72.1M712.5 69.6V73.4M713.5 70.3V72.7M714.5 71.0V72.0M715.5 71.0V72.0M716.5 70.4V72.6M717.5 69.8V73.2M718.5 69.7V73.3M719.5 68.2V74.8M720.5 70.8V72.2M721.5 70.2V72.8M722.5 68.3V74.7M723.5 69.4V73.6M724.5 70.2V72.8M725.5 70.6V72.4M726.5 70.4V72.6M727.5 70.6V72.4M728.5 71.0V72.0M729.5 70.4V72.6M730.5 70.3V72.7M731.5 69.7V73.3M732.5 71.0V72.0M733.5 70.9V72.1M734.5 69.7V73.3M735.5 69.7V73.3M736.5 69.7V73.3M737.5 69.4V73.6M738.5 68.6V74.4M739.5 68.8V74.2M740.5 68.4V74.6M741.5 68.0V75.0M742.5 67.0V76.0M743.5 67.0V76.0M744.5 67.8V75.2M745.5 68.7V74.3M746.5 68.0V75.0M747.5 69.4V73.6M748.5 69.6V73.4M749.5 69.9V73.1M750.5 71.0V72.0M751.5 71.0V72.0M752.5 70.9V72.1M753.5 70.7V72.3M754.5 70.2V72.8M755.5 70.1V72.9M756.5 69.4V73.6M757.5 68.8V74.2M758.5 68.0V75.0M759.5 70.6V72.4M760.5 68.5V74.5M761.5 68.7V74.3M762.5 68.9V74.1M763.5 68.6V74.4M764.5 68.3V74.7M765.5 69.6V73.4M766.5 71.0V72.0M767.5 70.5V72.5M768.5 70.9V72.1" stroke="#6464dc" stroke-width="1" fill="none"/></svg>
<div class="a" style="left:990px;top:206px;width:1px;height:416px;background:#a8a8a8"></div>
<div class="a" style="left:991px;top:206px;width:17px;height:416px;background:#f0f0f0"></div>
<div class="a" style="left:991px;top:222px;width:17px;height:384px;background:#cdcdcd"></div>
<svg style="left:995px;top:211px" width="9" height="6"><path d="M0.8 5L4.5 1.2L8.2 5" stroke="#3a3a3a" stroke-width="1.9" fill="none"/></svg>
<svg style="left:995px;top:610px" width="9" height="6"><path d="M0.8 1L4.5 4.8L8.2 1" stroke="#3a3a3a" stroke-width="1.9" fill="none"/></svg>
<div class="a" style="left:84px;top:622px;width:924px;height:17px;background:#f0f0f0"></div>
<div class="a" style="left:237px;top:623px;width:437px;height:15px;background:#cdcdcd"></div>
<svg style="left:225px;top:626px" width="6" height="9"><path d="M5 0.8L1.2 4.5L5 8.2" stroke="#3a3a3a" stroke-width="1.9" fill="none"/></svg>
<svg style="left:980px;top:626px" width="6" height="9"><path d="M1 0.8L4.8 4.5L1 8.2" stroke="#3a3a3a" stroke-width="1.9" fill="none"/></svg>
<div class="a" style="left:84px;top:639px;width:924px;height:56px;background:#f8f9fc"></div>
<div class="a" style="left:84px;top:639px;width:924px;height:1px;background:#d8d8d8"></div>
<div class="a" style="left:88px;top:645px;width:4px;height:1px;background:#8a8a8a"></div><div class="a" style="left:88px;top:649px;width:4px;height:1px;background:#8a8a8a"></div><div class="a" style="left:88px;top:653px;width:4px;height:1px;background:#8a8a8a"></div><div class="a" style="left:88px;top:657px;width:4px;height:1px;background:#8a8a8a"></div><div class="a" style="left:88px;top:661px;width:4px;height:1px;background:#8a8a8a"></div><div class="a" style="left:88px;top:665px;width:4px;height:1px;background:#8a8a8a"></div><div class="a" style="left:88px;top:669px;width:4px;height:1px;background:#8a8a8a"></div><div class="a" style="left:88px;top:673px;width:4px;height:1px;background:#8a8a8a"></div><div class="a" style="left:88px;top:677px;width:4px;height:1px;background:#8a8a8a"></div><div class="a" style="left:88px;top:681px;width:4px;height:1px;background:#8a8a8a"></div><div class="a" style="left:88px;top:685px;width:4px;height:1px;background:#8a8a8a"></div><div class="a" style="left:88px;top:689px;width:4px;height:1px;background:#8a8a8a"></div>
<div class="a" style="left:94px;top:640px;width:1px;height:55px;background:#c0c0c0"></div>
<div class="a t" style="left:101px;top:650px;font-size:12px">Project Rate (Hz)</div>
<div class="a" style="left:101px;top:669px;width:80px;height:23px;background:#fff;border:1px solid #7a7a7a"></div>
<div class="a t" style="left:107px;top:673px;font-size:12.4px">44100</div>
<svg style="left:165px;top:678px" width="10" height="6"><path d="M1 1L5 5L9 1" stroke="#404040" stroke-width="1.1" fill="none"/></svg>
<div class="a" style="left:199px;top:648px;width:1px;height:20px;background:#a0a0a0"></div>
<div class="a" style="left:199px;top:671px;width:1px;height:20px;background:#a0a0a0"></div>
<div class="a t" style="left:206px;top:650px;font-size:12px">Snap-To</div>
<div class="a" style="left:206px;top:669px;width:73px;height:23px;background:#e5e5e5;border:1px solid #adadad"></div>
<div class="a t" style="left:210px;top:673px;font-size:12px">Off</div>
<svg style="left:264px;top:678px" width="10" height="6"><path d="M1 1L5 5L9 1" stroke="#404040" stroke-width="1.1" fill="none"/></svg>
<div class="a" style="left:285px;top:648px;width:1px;height:20px;background:#a0a0a0"></div>
<div class="a" style="left:285px;top:671px;width:1px;height:20px;background:#a0a0a0"></div>
<div class="a t" style="left:292px;top:650px;font-size:12px">Audio Position</div>
<div class="a" style="left:446px;top:648px;width:1px;height:20px;background:#a0a0a0"></div>
<div class="a" style="left:446px;top:671px;width:1px;height:20px;background:#a0a0a0"></div>
<div class="a" style="left:453px;top:645px;width:300px;height:23px;background:#e5e5e5;border:1px solid #adadad"></div>
<div class="a t" style="left:457px;top:650px;width:278px;overflow:hidden;font-size:12px">Start and End of Selection</div>
<svg style="left:737px;top:653px" width="10" height="6"><path d="M1 1L5 5L9 1" stroke="#404040" stroke-width="1.1" fill="none"/></svg>
<div class="a" style="left:292px;top:669px;width:147px;height:20px;background:#c4c6cc;border-top:2px solid #7a7a7a;border-left:2px solid #7a7a7a"></div>
<div class="a t" style="left:294.3px;top:671px;width:10.3px;height:17px;background:#c8cad2;text-align:center;line-height:17px;font-size:13.5px;color:#20208a;-webkit-text-stroke:0.3px #20208a"><span style="display:inline-block;transform:scaleX(0.78)">0</span></div>
<div class="a t" style="left:304.2px;top:671px;width:10.3px;height:17px;background:#c8cad2;text-align:center;line-height:17px;font-size:13.5px;color:#20208a;-webkit-text-stroke:0.3px #20208a"><span style="display:inline-block;transform:scaleX(0.78)">0</span></div>
<div class="a t" style="left:314.1px;top:671px;width:13.0px;height:17px;background:#b2b5c2;text-align:center;line-height:17px;font-size:13.5px;color:#20208a;-webkit-text-stroke:0.3px #20208a"><span style="display:inline-block;transform:scaleX(0.78)">h</span></div>
<div class="a t" style="left:326.7px;top:671px;width:10.3px;height:17px;background:#c8cad2;text-align:center;line-height:17px;font-size:13.5px;color:#20208a;-webkit-text-stroke:0.3px #20208a"><span style="display:inline-block;transform:scaleX(0.78)">0</span></div>
<div class="a t" style="left:336.6px;top:671px;width:10.3px;height:17px;background:#c8cad2;text-align:center;line-height:17px;font-size:13.5px;color:#20208a;-webkit-text-stroke:0.3px #20208a"><span style="display:inline-block;transform:scaleX(0.78)">0</span></div>
<div class="a t" style="left:346.5px;top:671px;width:17.4px;height:17px;background:#b2b5c2;text-align:center;line-height:17px;font-size:13.5px;color:#20208a;-webkit-text-stroke:0.3px #20208a"><span style="display:inline-block;transform:scaleX(0.78)">m</span></div>
<div class="a t" style="left:363.5px;top:671px;width:10.3px;height:17px;background:#c8cad2;text-align:center;line-height:17px;font-size:13.5px;color:#20208a;-webkit-text-stroke:0.3px #20208a"><span style="display:inline-block;transform:scaleX(0.78)">0</span></div>
<div class="a t" style="left:373.4px;top:671px;width:10.3px;height:17px;background:#c8cad2;text-align:center;line-height:17px;font-size:13.5px;color:#20208a;-webkit-text-stroke:0.3px #20208a"><span style="display:inline-block;transform:scaleX(0.78)">0</span></div>
<div class="a t" style="left:383.3px;top:671px;width:4.1px;height:17px;background:#c8cad2;text-align:center;line-height:17px;font-size:13.5px;color:#20208a;-webkit-text-stroke:0.3px #20208a"><span style="display:inline-block;transform:scaleX(0.78)">.</span></div>
<div class="a t" style="left:387.0px;top:671px;width:10.3px;height:17px;background:#c8cad2;text-align:center;line-height:17px;font-size:13.5px;color:#20208a;-webkit-text-stroke:0.3px #20208a"><span style="display:inline-block;transform:scaleX(0.78)">0</span></div>
<div class="a t" style="left:396.9px;top:671px;width:10.3px;height:17px;background:#c8cad2;text-align:center;line-height:17px;font-size:13.5px;color:#20208a;-webkit-text-stroke:0.3px #20208a"><span style="display:inline-block;transform:scaleX(0.78)">0</span></div>
<div class="a t" style="left:406.8px;top:671px;width:10.3px;height:17px;background:#c8cad2;text-align:center;line-height:17px;font-size:13.5px;color:#20208a;-webkit-text-stroke:0.3px #20208a"><span style="display:inline-block;transform:scaleX(0.78)">0</span></div>
<div class="a t" style="left:416.7px;top:671px;width:11.6px;height:17px;background:#b2b5c2;text-align:center;line-height:17px;font-size:13.5px;color:#20208a;-webkit-text-stroke:0.3px #20208a"><span style="display:inline-block;transform:scaleX(0.78)">s</span></div>
<div class="a" style="left:429px;top:671px;width:10px;height:17px;background:#c0c0c4"></div>
<svg style="left:430px;top:676px" width="9" height="6"><path d="M0 0H8L4 5Z" fill="#000"/></svg>
<div class="a" style="left:446px;top:671px;width:1px;height:20px;background:#a0a0a0"></div>
<div class="a" style="left:453px;top:669px;width:147px;height:20px;background:#c4c6cc;border-top:2px solid #7a7a7a;border-left:2px solid #7a7a7a"></div>
<div class="a t" style="left:455.3px;top:671px;width:10.3px;height:17px;background:#c8cad2;text-align:center;line-height:17px;font-size:13.5px;color:#20208a;-webkit-text-stroke:0.3px #20208a"><span style="display:inline-block;transform:scaleX(0.78)">0</span></div>
<div class="a t" style="left:465.2px;top:671px;width:10.3px;height:17px;background:#c8cad2;text-align:center;line-height:17px;font-size:13.5px;color:#20208a;-webkit-text-stroke:0.3px #20208a"><span style="display:inline-block;transform:scaleX(0.78)">0</span></div>
<div class="a t" style="left:475.1px;top:671px;width:13.0px;height:17px;background:#b2b5c2;text-align:center;line-height:17px;font-size:13.5px;color:#20208a;-webkit-text-stroke:0.3px #20208a"><span style="display:inline-block;transform:scaleX(0.78)">h</span></div>
<div class="a t" style="left:487.7px;top:671px;width:10.3px;height:17px;background:#c8cad2;text-align:center;line-height:17px;font-size:13.5px;color:#20208a;-webkit-text-stroke:0.3px #20208a"><span style="display:inline-block;transform:scaleX(0.78)">0</span></div>
<div class="a t" style="left:497.6px;top:671px;width:10.3px;height:17px;background:#c8cad2;text-align:center;line-height:17px;font-size:13.5px;color:#20208a;-webkit-text-stroke:0.3px #20208a"><span style="display:inline-block;transform:scaleX(0.78)">0</span></div>
<div class="a t" style="left:507.5px;top:671px;width:17.4px;height:17px;background:#b2b5c2;text-align:center;line-height:17px;font-size:13.5px;color:#20208a;-webkit-text-stroke:0.3px #20208a"><span style="display:inline-block;transform:scaleX(0.78)">m</span></div>
<div class="a t" style="left:524.5px;top:671px;width:10.3px;height:17px;background:#c8cad2;text-align:center;line-height:17px;font-size:13.5px;color:#20208a;-webkit-text-stroke:0.3px #20208a"><span style="display:inline-block;transform:scaleX(0.78)">0</span></div>
<div class="a t" style="left:534.4px;top:671px;width:10.3px;height:17px;background:#c8cad2;text-align:center;line-height:17px;font-size:13.5px;color:#20208a;-webkit-text-stroke:0.3px #20208a"><span style="display:inline-block;transform:scaleX(0.78)">0</span></div>
<div class="a t" style="left:544.3px;top:671px;width:4.1px;height:17px;background:#c8cad2;text-align:center;line-height:17px;font-size:13.5px;color:#20208a;-webkit-text-stroke:0.3px #20208a"><span style="display:inline-block;transform:scaleX(0.78)">.</span></div>
<div class="a t" style="left:548.0px;top:671px;width:10.3px;height:17px;background:#c8cad2;text-align:center;line-height:17px;font-size:13.5px;color:#20208a;-webkit-text-stroke:0.3px #20208a"><span style="display:inline-block;transform:scaleX(0.78)">0</span></div>
<div class="a t" style="left:557.9px;top:671px;width:10.3px;height:17px;background:#c8cad2;text-align:center;line-height:17px;font-size:13.5px;color:#20208a;-webkit-text-stroke:0.3px #20208a"><span style="display:inline-block;transform:scaleX(0.78)">0</span></div>
<div class="a t" style="left:567.8px;top:671px;width:10.3px;height:17px;background:#c8cad2;text-align:center;line-height:17px;font-size:13.5px;color:#20208a;-webkit-text-stroke:0.3px #20208a"><span style="display:inline-block;transform:scaleX(0.78)">0</span></div>
<div class="a t" style="left:577.7px;top:671px;width:11.6px;height:17px;background:#b2b5c2;text-align:center;line-height:17px;font-size:13.5px;color:#20208a;-webkit-text-stroke:0.3px #20208a"><span style="display:inline-block;transform:scaleX(0.78)">s</span></div>
<div class="a" style="left:590px;top:671px;width:10px;height:17px;background:#c0c0c4"></div>
<svg style="left:591px;top:676px" width="9" height="6"><path d="M0 0H8L4 5Z" fill="#000"/></svg>
<div class="a" style="left:606px;top:669px;width:147px;height:20px;background:#c4c6cc;border-top:2px solid #7a7a7a;border-left:2px solid #7a7a7a"></div>
<div class="a t" style="left:608.3px;top:671px;width:10.3px;height:17px;background:#c8cad2;text-align:center;line-height:17px;font-size:13.5px;color:#20208a;-webkit-text-stroke:0.3px #20208a"><span style="display:inline-block;transform:scaleX(0.78)">0</span></div>
<div class="a t" style="left:618.2px;top:671px;width:10.3px;height:17px;background:#c8cad2;text-align:center;line-height:17px;font-size:13.5px;color:#20208a;-webkit-text-stroke:0.3px #20208a"><span style="display:inline-block;transform:scaleX(0.78)">0</span></div>
<div class="a t" style="left:628.1px;top:671px;width:13.0px;height:17px;background:#b2b5c2;text-align:center;line-height:17px;font-size:13.5px;color:#20208a;-webkit-text-stroke:0.3px #20208a"><span style="display:inline-block;transform:scaleX(0.78)">h</span></div>
<div class="a t" style="left:640.7px;top:671px;width:10.3px;height:17px;background:#c8cad2;text-align:center;line-height:17px;font-size:13.5px;color:#20208a;-webkit-text-stroke:0.3px #20208a"><span style="display:inline-block;transform:scaleX(0.78)">0</span></div>
<div class="a t" style="left:650.6px;top:671px;width:10.3px;height:17px;background:#c8cad2;text-align:center;line-height:17px;font-size:13.5px;color:#20208a;-webkit-text-stroke:0.3px #20208a"><span style="display:inline-block;transform:scaleX(0.78)">6</span></div>
<div class="a t" style="left:660.5px;top:671px;width:17.4px;height:17px;background:#b2b5c2;text-align:center;line-height:17px;font-size:13.5px;color:#20208a;-webkit-text-stroke:0.3px #20208a"><span style="display:inline-block;transform:scaleX(0.78)">m</span></div>
<div class="a t" style="left:677.5px;top:671px;width:10.3px;height:17px;background:#c8cad2;text-align:center;line-height:17px;font-size:13.5px;color:#20208a;-webkit-text-stroke:0.3px #20208a"><span style="display:inline-block;transform:scaleX(0.78)">5</span></div>
<div class="a t" style="left:687.4px;top:671px;width:10.3px;height:17px;background:#c8cad2;text-align:center;line-height:17px;font-size:13.5px;color:#20208a;-webkit-text-stroke:0.3px #20208a"><span style="display:inline-block;transform:scaleX(0.78)">0</span></div>
<div class="a t" style="left:697.3px;top:671px;width:4.1px;height:17px;background:#c8cad2;text-align:center;line-height:17px;font-size:13.5px;color:#20208a;-webkit-text-stroke:0.3px #20208a"><span style="display:inline-block;transform:scaleX(0.78)">.</span></div>
<div class="a t" style="left:701.0px;top:671px;width:10.3px;height:17px;background:#c8cad2;text-align:center;line-height:17px;font-size:13.5px;color:#20208a;-webkit-text-stroke:0.3px #20208a"><span style="display:inline-block;transform:scaleX(0.78)">1</span></div>
<div class="a t" style="left:710.9px;top:671px;width:10.3px;height:17px;background:#c8cad2;text-align:center;line-height:17px;font-size:13.5px;color:#20208a;-webkit-text-stroke:0.3px #20208a"><span style="display:inline-block;transform:scaleX(0.78)">5</span></div>
<div class="a t" style="left:720.8px;top:671px;width:10.3px;height:17px;background:#c8cad2;text-align:center;line-height:17px;font-size:13.5px;color:#20208a;-webkit-text-stroke:0.3px #20208a"><span style="display:inline-block;transform:scaleX(0.78)">7</span></div>
<div class="a t" style="left:730.7px;top:671px;width:11.6px;height:17px;background:#b2b5c2;text-align:center;line-height:17px;font-size:13.5px;color:#20208a;-webkit-text-stroke:0.3px #20208a"><span style="display:inline-block;transform:scaleX(0.78)">s</span></div>
<div class="a" style="left:743px;top:671px;width:10px;height:17px;background:#c0c0c4"></div>
<svg style="left:744px;top:676px" width="9" height="6"><path d="M0 0H8L4 5Z" fill="#000"/></svg>
<div class="a" style="left:84px;top:694px;width:924px;height:1px;background:#d0d0d0"></div>
<div class="a" style="left:84px;top:695px;width:924px;height:24px;background:#f0f0f0"></div>
<div class="a" style="left:93px;top:696px;width:1px;height:22px;background:#d8d8d8"></div>
<div class="a t" style="left:98px;top:701px;font-size:11.5px">Stopped.</div>
<div class="a" style="left:264px;top:696px;width:1px;height:22px;background:#d8d8d8"></div>
<div class="a" style="left:829px;top:696px;width:1px;height:22px;background:#d8d8d8"></div>
<div class="a" style="left:1002px;top:708px;width:2px;height:2px;background:#a0a0a0"></div>
<div class="a" style="left:999px;top:711px;width:2px;height:2px;background:#a0a0a0"></div>
<div class="a" style="left:1002px;top:711px;width:2px;height:2px;background:#a0a0a0"></div>
<div class="a" style="left:996px;top:714px;width:2px;height:2px;background:#a0a0a0"></div>
<div class="a" style="left:999px;top:714px;width:2px;height:2px;background:#a0a0a0"></div>
<div class="a" style="left:1002px;top:714px;width:2px;height:2px;background:#a0a0a0"></div>
<svg style="left:21px;top:368px" width="31" height="41"><path d="M0 0H24L31 7V41H0Z" fill="#f6f6f8"/><path d="M24 0V7H31Z" fill="#d8d8dc"/></svg>
<svg style="left:23px;top:377px;opacity:1.0" width="26" height="26"><defs><linearGradient id="dga" x1="0" y1="0" x2="1" y2="1"><stop offset="0" stop-color="#e08a40"/><stop offset="0.5" stop-color="#a05a70"/><stop offset="1" stop-color="#7a48b0"/></linearGradient></defs><circle cx="13" cy="13" r="12" fill="url(#dga)"/><circle cx="13" cy="13" r="9" fill="#3a3a40"/><path d="M17 7L21 4" stroke="#c06a8a" stroke-width="2"/><circle cx="13" cy="13" r="3.8" fill="#f4f4f4"/><circle cx="13" cy="13" r="1.1" fill="#222"/></svg>
<div class="a t" style="left:2px;top:418px;font-size:12.3px;color:#fff;-webkit-text-stroke:0.25px #fff;text-shadow:0 1px 1px rgba(0,0,0,0.95),1px 1px 2px rgba(0,0,0,0.7)">production...</div>
<svg style="left:0;top:0" width="1023" height="767"><path d="M67.2 363.6L142.3 384L147.8 359.7L204.1 426.2L119.6 455.2L125.1 431.7L54.7 409Z" fill="#000"/><path d="M74.3 375.3L147 393.3L151.7 379.3L187.7 422.3L134.5 440.3L137.6 425.4L66.4 404.3Z" fill="#fcc41c"/></svg>
<svg style="left:211px;top:410px" width="32" height="41"><path d="M0 0H25L32 7V41H0Z" fill="#dcdce4"/><path d="M25 0V7H32Z" fill="#b8b8c4"/></svg>
<svg style="left:214px;top:419px;opacity:0.9" width="26" height="26"><defs><linearGradient id="dgb" x1="0" y1="0" x2="1" y2="1"><stop offset="0" stop-color="#e08a40"/><stop offset="0.5" stop-color="#a05a70"/><stop offset="1" stop-color="#7a48b0"/></linearGradient></defs><circle cx="13" cy="13" r="12" fill="url(#dgb)"/><circle cx="13" cy="13" r="9" fill="#3a3a40"/><path d="M17 7L21 4" stroke="#c06a8a" stroke-width="2"/><circle cx="13" cy="13" r="3.8" fill="#f4f4f4"/><circle cx="13" cy="13" r="1.1" fill="#222"/></svg>
<div class="a t" style="left:193px;top:459px;font-size:12.6px;color:#e6e6ee">production</div>
<div class="a" style="left:248px;top:453px;width:55px;height:18px;background:#ffffff"></div>
<svg style="left:251px;top:456px" width="13" height="12"><path d="M1 6H11M6.5 1.5L11 6L6.5 10.5" stroke="#2e3c96" stroke-width="1.2" fill="none"/></svg>
<div class="a t" style="left:267px;top:455px;font-size:12.5px;color:#2e3c96">Move</div>
</body></html>
